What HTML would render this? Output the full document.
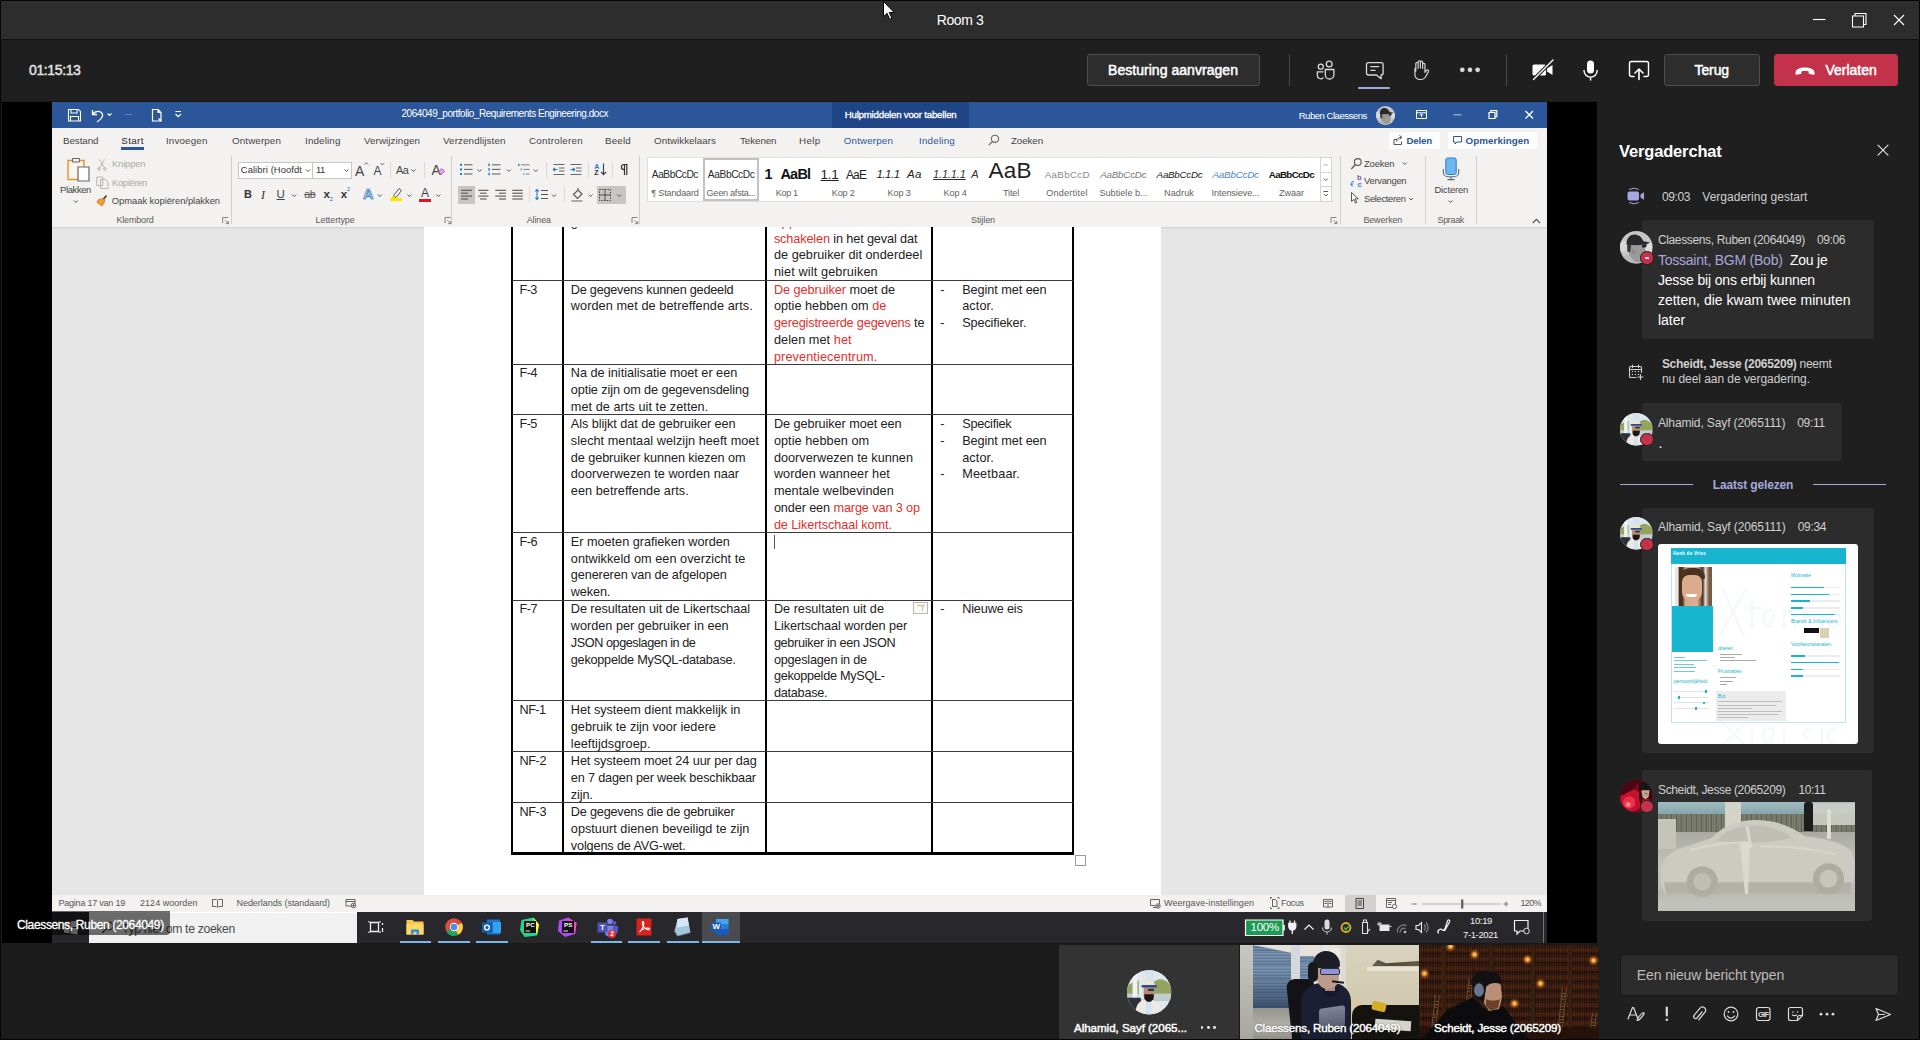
<!DOCTYPE html>
<html lang="nl">
<head>
<meta charset="utf-8">
<title>Room 3</title>
<style>
*{box-sizing:border-box;margin:0;padding:0}
html,body{width:1920px;height:1040px;overflow:hidden;background:#1f1f1f;font-family:"Liberation Sans",sans-serif;}
.a{position:absolute}
.t{position:absolute;white-space:nowrap;line-height:1}
svg{position:absolute;overflow:visible}
#titlebar{left:0;top:0;width:1920px;height:39px;background:#2d2d2d}
#titleline{left:0;top:39px;width:1920px;height:1px;background:#111}
#toolbar{left:0;top:40px;width:1920px;height:62px;background:#1f1f1f;border-bottom:1.500px solid #1a1a1a}
#stage{left:2px;top:102px;width:1595px;height:841px;background:#000}
#chat{left:1598px;top:101px;width:322px;height:939px;background:#1f1f1f}
#strip{left:0;top:943px;width:1598px;height:97px;background:#1b1b1b}
.btn{background:#2d2d2d;border:1px solid #4d4d4d;border-radius:3px;color:#fff;font-weight:bold;font-size:14px;line-height:30px;text-align:center;white-space:nowrap}
#word{left:52px;top:102px;width:1495px;height:841px;background:#f3f2f1;overflow:hidden}
#wordin{left:-52px;top:-102px;width:1920px;height:1040px}
</style>
</head>
<body>
<div class="a" id="titlebar"></div>
<div class="a" id="titleline"></div>
<div class="a" id="toolbar"></div>
<div class="a" id="stage"></div>
<div class="a" id="chat"></div>
<div class="a" id="strip"></div>
<div class="a" style="left:0;top:0;width:1920px;height:1px;background:#060606"></div>
<div class="a" style="left:0;top:0;width:1px;height:1040px;background:#060606"></div>
<div class="a" style="left:1919px;top:0;width:1px;height:1040px;background:#060606"></div>
<div class="a" style="left:0;top:1039px;width:1920px;height:1px;background:#060606;z-index:5"></div>
<svg style="left:0;top:0" width="1920" height="40" viewBox="0 0 1920 40">
<path d="M883.5 1.5v15.2l3.6-3.4 2.6 6 2.2-.9-2.6-5.9h4.9z" fill="#fff" stroke="#000" stroke-width="1" stroke-linejoin="miter"/>
<path d="M1813 19.5h12.5" stroke="#fff" stroke-width="1.1" fill="none"/>
<path d="M1852.5 16h11v11h-11z M1855 16v-2.5h11v11h-2.5" stroke="#fff" stroke-width="1.1" fill="none"/>
<path d="M1894 15l10 10M1904 15l-10 10" stroke="#fff" stroke-width="1.1" fill="none"/>
</svg>

<div class="a btn" style="left:1087px;top:54px;width:173px;height:32px"></div>
<div class="a" style="left:1289px;top:54px;width:1px;height:32px;background:#484848"></div>
<div class="a" style="left:1358px;top:86.600px;width:32px;height:2.500px;background:#a6a7dc;border-radius:1px"></div>
<div class="a" style="left:1506px;top:54px;width:1px;height:32px;background:#484848"></div>
<div class="a btn" style="left:1664px;top:54px;width:96px;height:32px"></div>
<div class="a btn" style="left:1774px;top:54px;width:124px;height:32px;background:#c4314b;border-color:#c4314b;padding-left:38px"></div>
<svg style="left:0;top:40px" width="1920" height="61" viewBox="0 40 1920 61" fill="none" stroke="#dadada" stroke-width="1.3" stroke-linecap="round" stroke-linejoin="round">
<!-- people -->
<circle cx="1320.800" cy="66.700" r="2.500"/><circle cx="1329.200" cy="64" r="2.900"/>
<path d="M1325.300 69.500h8.600v5.200a4.300 4.300 0 0 1-8.600 0z"/>
<path d="M1323 71.800h-5.700v3.500a3.400 3.400 0 0 0 5.700 2.600"/>
<!-- chat -->
<path d="M1368.500 62.600h12.600a2 2 0 0 1 2 2v8.400a2 2 0 0 1-2 2v3.800l-4.600-3.800h-8a2 2 0 0 1-2-2v-8.400a2 2 0 0 1 2-2z"/>
<path d="M1370.800 66.700h7.800M1370.800 70.300h4.400"/>
<!-- hand -->
<g transform="translate(1421.700 70.200) scale(0.880) translate(-1423.200 -70.950)"><path d="M1416.500 72v-8.500a1.300 1.300 0 0 1 2.600 0v5.500v-7.500a1.300 1.300 0 0 1 2.600 0v7v-6.500a1.300 1.300 0 0 1 2.600 0v7v-4.500a1.300 1.300 0 0 1 2.600 0v9l1.600-2.300a1.400 1.400 0 0 1 2.400 1.400l-3.600 6.400a5.500 5.500 0 0 1-4.800 2.500h-1.500a5.500 5.500 0 0 1-5.500-5.500v-6.500a1.200 1.200 0 0 1 1-1"/></g>
<!-- dots -->
<g fill="#d6d6d6" stroke="none"><circle cx="1462.300" cy="69.800" r="2.400"/><circle cx="1470" cy="69.800" r="2.400"/><circle cx="1477.600" cy="69.800" r="2.400"/></g>
<!-- camera off -->
<g fill="#fff" stroke="none"><path d="M1534 64.500h10.500a1.500 1.500 0 0 1 1.500 1.500v8a1.500 1.500 0 0 1-1.500 1.500h-10.500a1.500 1.500 0 0 1-1.500-1.500v-8a1.500 1.500 0 0 1 1.500-1.500z"/><path d="M1547 68.500l5.500-3.500v10l-5.500-3.500z"/></g>
<path d="M1533 80l20-20" stroke="#1f1f1f" stroke-width="3.500"/><path d="M1533.500 79.500l19.500-19.500" stroke="#fff" stroke-width="1.400"/>
<!-- mic -->
<rect x="1587" y="60.500" width="7" height="13" rx="3.500" fill="#fff" stroke="none"/>
<path d="M1584 70.500a6.600 6.600 0 0 0 13.200 0M1590.600 77.500v2.500" stroke="#fff" stroke-width="1.400"/>
<!-- share -->
<path d="M1634 76.500h-2.500a2 2 0 0 1-2-2v-11a2 2 0 0 1 2-2h15a2 2 0 0 1 2 2v11a2 2 0 0 1-2 2h-2.500" stroke="#fff" stroke-width="1.400"/>
<path d="M1639 79.500v-10.500M1635 73l4-4l4 4" stroke="#fff" stroke-width="1.600"/>
<!-- phone -->
<path d="M1795.500 72.500c0-3 4-5 9.500-5s9.500 2 9.500 5v1.200a1 1 0 0 1-1.200 1l-3.800-.8a1 1 0 0 1-.8-1v-1.400c-1-.5-2.300-.7-3.700-.7s-2.700.2-3.700.7v1.400a1 1 0 0 1-.8 1l-3.800.8a1 1 0 0 1-1.200-1z" fill="#fff" stroke="none"/>
</svg>

<div class="t" style="left:29.0px;top:63.0px;font-size:14px;color:#e2e2e2;letter-spacing:-0.375px;-webkit-text-stroke:.45px #e2e2e2;">01:15:13</div>
<div class="t" style="left:1108.0px;top:63.1px;font-size:14px;color:#fff;letter-spacing:0.042px;-webkit-text-stroke:.5px #fff;">Besturing aanvragen</div>
<div class="t" style="left:1694.5px;top:63.1px;font-size:14px;color:#fff;letter-spacing:-0.106px;-webkit-text-stroke:.5px #fff;">Terug</div>
<div class="t" style="left:1825.4px;top:63.1px;font-size:14px;color:#fff;letter-spacing:0.003px;-webkit-text-stroke:.5px #fff;">Verlaten</div>
<div class="t" style="left:936.8px;top:13.1px;font-size:14px;color:#fff;letter-spacing:-0.422px;">Room 3</div>
<div class="a" id="word"><div class="a" id="wordin">
<div class="a" style="left:52px;top:102px;width:1495px;height:26px;background:#2b579a"></div>
<div class="a" style="left:832px;top:102px;width:137px;height:26px;background:#1f4586"></div>
<div class="t" style="left:401.5px;top:109.3px;font-size:10px;color:#fff;letter-spacing:-0.456px;">2064049_portfolio_Requirements Engineering.docx</div>
<div class="t" style="left:844.7px;top:109.5px;font-size:9.7px;color:#fff;letter-spacing:-0.216px;-webkit-text-stroke:.3px #fff;">Hulpmiddelen voor tabellen</div>
<div class="t" style="left:1298.7px;top:111.0px;font-size:9.6px;color:#fff;letter-spacing:-0.509px;">Ruben Claessens</div>
<svg style="left:1375.5px;top:105.8px" width="19.0" height="19.0" viewBox="-16 -16 32 32"><defs><clipPath id="av1"><circle cx="0" cy="0" r="16"/></clipPath></defs><g clip-path="url(#av1)"><rect x="-16" y="-16" width="32" height="32" fill="#c6c6c6"/><rect x="-16" y="-6" width="9" height="10" fill="#d8d8d8"/><rect x="9" y="-4" width="7" height="9" fill="#dcdcdc"/><ellipse cx="-4" cy="16" rx="13" ry="9" fill="#b9b9b9"/><path d="M-8 -2l1 9l5 7l7 1l3-5l1-7l-2-6z" fill="#9a9a9a"/><path d="M-9 -3l0 7l3 1l1-7z" fill="#3c3c3c"/><path d="M-9.500 -2.500c-1-11 12-14 16.500-3.500l6.500 1.200l-4 2l-9 0.800z" fill="#2a2a2a"/><path d="M5.500 -2.500l5-0.500l-1 3l-3.500 0.500z" fill="#222"/><path d="M-3 2a2 3 0 0 0 2 4" stroke="#777" stroke-width="1" fill="none"/></g></svg>
<svg style="left:52px;top:102px" width="1495" height="26" viewBox="52 102 1495 26" fill="none" stroke="#fff" stroke-width="1.100">
<path d="M68.500 109.500h10l2 2v9.500h-12z M71 109.500v3.500h6v-3.500 M70.500 121v-4.500h8v4.500"/>
<path d="M92.500 110v4.500h4.500 M92.800 114.200c2.500-3.800 8.500-4 9.700 0.300c0.800 3.200-2.500 5.500-5.500 7.500" stroke-width="1.300"/>
<path d="M107.500 113.500l2 2l2-2" />
<path d="M125 114.500h7" stroke="#5f83bd"/>
<path d="M152.500 109.500h5.500l3 3v8.500h-8.500z M158 109.500v3h3 M158.500 118.500l3 3" stroke-width="1.200"/>
<path d="M175.500 111.500h5.500 M175.500 114l2.750 2.750l2.750-2.750" />
<path d="M1416.500 110.500h10v8h-10z M1416.500 112.800h10 M1421.500 117v-3 M1420 115.300l1.500-1.500l1.500 1.500" stroke-width="1"/>
<path d="M1453.500 114.800h8" stroke="#9fb6dc" stroke-width="1.200"/>
<path d="M1489 112.500h6v6h-6z M1490.800 112.500v-1.800h6v6h-1.800" stroke-width="1.200"/>
<path d="M1525.500 111l7.500 7.500 M1533 111l-7.500 7.500" stroke-width="1.400"/>
</svg>
<div class="a" style="left:52px;top:128px;width:1495px;height:24px;background:#f3f2f1"></div>
<div class="t" style="left:63.0px;top:136.1px;font-size:9.8px;color:#444;letter-spacing:-0.079px;">Bestand</div>
<div class="t" style="left:121.3px;top:136.1px;font-size:9.8px;color:#2b2b2b;letter-spacing:0.359px;">Start</div>
<div class="t" style="left:166.0px;top:136.1px;font-size:9.8px;color:#444;letter-spacing:0.148px;">Invoegen</div>
<div class="t" style="left:232.0px;top:136.1px;font-size:9.8px;color:#444;letter-spacing:0.118px;">Ontwerpen</div>
<div class="t" style="left:305.0px;top:136.1px;font-size:9.8px;color:#444;letter-spacing:0.159px;">Indeling</div>
<div class="t" style="left:364.0px;top:136.1px;font-size:9.8px;color:#444;letter-spacing:0.082px;">Verwijzingen</div>
<div class="t" style="left:443.0px;top:136.1px;font-size:9.8px;color:#444;letter-spacing:0.107px;">Verzendlijsten</div>
<div class="t" style="left:529.0px;top:136.1px;font-size:9.8px;color:#444;letter-spacing:0.254px;">Controleren</div>
<div class="t" style="left:605.0px;top:136.1px;font-size:9.8px;color:#444;letter-spacing:0.188px;">Beeld</div>
<div class="t" style="left:654.0px;top:136.1px;font-size:9.8px;color:#444;letter-spacing:0.036px;">Ontwikkelaars</div>
<div class="t" style="left:740.0px;top:136.1px;font-size:9.8px;color:#444;letter-spacing:-0.078px;">Tekenen</div>
<div class="t" style="left:799.0px;top:136.1px;font-size:9.8px;color:#444;letter-spacing:0.336px;">Help</div>
<div class="t" style="left:843.8px;top:136.1px;font-size:9.8px;color:#2b579a;letter-spacing:0.140px;">Ontwerpen</div>
<div class="t" style="left:919.0px;top:136.1px;font-size:9.8px;color:#2b579a;letter-spacing:0.209px;">Indeling</div>
<div class="t" style="left:1011.0px;top:136.1px;font-size:9.8px;color:#444;letter-spacing:-0.115px;">Zoeken</div>
<div class="a" style="left:121px;top:147px;width:23px;height:2.500px;background:#2b579a"></div>
<svg style="left:988px;top:134px" width="12" height="12" viewBox="0 0 12 12" fill="none" stroke="#666" stroke-width="1.100"><circle cx="7" cy="4.800" r="3.600"/><path d="M4.500 7.500l-3.700 3.700"/></svg>
<div class="a" style="left:1388.500px;top:131.500px;width:51px;height:17.500px;background:#fdfdfd;border-radius:1px"></div>
<div class="a" style="left:1447.500px;top:131.500px;width:89.500px;height:17.500px;background:#fdfdfd;border-radius:1px"></div>
<div class="t" style="left:1406.6px;top:136.2px;font-size:9.6px;color:#2b579a;letter-spacing:-0.148px;font-weight:bold;">Delen</div>
<div class="t" style="left:1465.5px;top:136.1px;font-size:9.8px;color:#2b579a;letter-spacing:0.068px;font-weight:bold;">Opmerkingen</div>
<svg style="left:1388px;top:131px" width="150" height="18" viewBox="1388 131 150 18" fill="none" stroke="#555" stroke-width="1">
<path d="M1397 139.500h-3v5h7.500v-3 M1396.500 141.500c0.500-2.500 2-4 4.500-4.200 M1399.500 135.500l2.500 1.800l-2.500 2"/>
<path d="M1453.500 136.500h8v5.500h-4.500l-2 2v-2h-1.500z" stroke="#2b579a"/>
</svg>
<div class="a" style="left:52px;top:152px;width:1495px;height:75px;background:#f3f2f1"></div>
<div class="a" style="left:231.3px;top:155.5px;width:1px;height:68.0px;background:#d2d0ce"></div>
<div class="a" style="left:451.0px;top:155.5px;width:1px;height:68.0px;background:#d2d0ce"></div>
<div class="a" style="left:638.8px;top:155.5px;width:1px;height:68.0px;background:#d2d0ce"></div>
<div class="a" style="left:1340.3px;top:155.5px;width:1px;height:68.0px;background:#d2d0ce"></div>
<div class="a" style="left:1425.3px;top:155.5px;width:1px;height:68.0px;background:#d2d0ce"></div>
<div class="a" style="left:1476.2px;top:155.5px;width:1px;height:68.0px;background:#d2d0ce"></div>
<div class="a" style="left:389.5px;top:162.0px;width:1px;height:16.0px;background:#dcdad8"></div>
<div class="a" style="left:424.2px;top:162.0px;width:1px;height:16.0px;background:#dcdad8"></div>
<div class="a" style="left:546.0px;top:162.0px;width:1px;height:16.0px;background:#dcdad8"></div>
<div class="a" style="left:588.2px;top:162.0px;width:1px;height:16.0px;background:#dcdad8"></div>
<div class="a" style="left:612.4px;top:162.0px;width:1px;height:16.0px;background:#dcdad8"></div>
<div class="a" style="left:529.2px;top:186.0px;width:1px;height:17.0px;background:#dcdad8"></div>
<div class="a" style="left:564.3px;top:186.0px;width:1px;height:17.0px;background:#dcdad8"></div>
<div class="t" style="left:116.4px;top:216.3px;font-size:9.0px;color:#5a5a5a;letter-spacing:-0.166px;">Klembord</div>
<div class="t" style="left:315.6px;top:216.3px;font-size:9.0px;color:#5a5a5a;letter-spacing:-0.093px;">Lettertype</div>
<div class="t" style="left:526.7px;top:216.3px;font-size:9.0px;color:#5a5a5a;letter-spacing:-0.122px;">Alinea</div>
<div class="t" style="left:971.0px;top:216.3px;font-size:9.0px;color:#5a5a5a;letter-spacing:-0.074px;">Stijlen</div>
<div class="t" style="left:1363.4px;top:216.3px;font-size:9.0px;color:#5a5a5a;letter-spacing:-0.154px;">Bewerken</div>
<div class="t" style="left:1437.5px;top:216.3px;font-size:9.0px;color:#5a5a5a;letter-spacing:-0.339px;">Spraak</div>
<div class="t" style="left:60.0px;top:184.8px;font-size:9.4px;color:#444;letter-spacing:-0.337px;">Plakken</div>
<div class="t" style="left:112.0px;top:159.3px;font-size:9.4px;color:#a9a9a9;letter-spacing:-0.158px;">Knippen</div>
<div class="t" style="left:112.0px;top:177.5px;font-size:9.4px;color:#a9a9a9;letter-spacing:-0.316px;">Kopiëren</div>
<div class="t" style="left:111.8px;top:196.4px;font-size:9.4px;color:#444;letter-spacing:-0.031px;">Opmaak kopiëren/plakken</div>
<div class="a" style="left:238px;top:161.500px;width:75px;height:17px;background:#fff;border:1px solid #c8c6c4"></div>
<div class="a" style="left:312px;top:161.500px;width:39.500px;height:17px;background:#fff;border:1px solid #c8c6c4"></div>
<div class="t" style="left:240.8px;top:165.1px;font-size:9.4px;color:#333;letter-spacing:0.085px;">Calibri (Hoofdt</div>
<div class="t" style="left:316.0px;top:165.1px;font-size:9.4px;color:#333;letter-spacing:-0.567px;">11</div>
<div class="t" style="left:355.0px;top:163.7px;font-size:14px;color:#444;letter-spacing:-0.344px;">A</div>
<div class="t" style="left:373.5px;top:165.1px;font-size:12px;color:#444;letter-spacing:-0.516px;">A</div>
<div class="t" style="left:396.0px;top:165.1px;font-size:11px;color:#444;letter-spacing:-0.584px;">Aa</div>
<div class="t" style="left:431.5px;top:162.7px;font-size:14px;color:#444;letter-spacing:-0.844px;">A</div>
<div class="t" style="left:243.9px;top:189.1px;font-size:11px;color:#333;letter-spacing:-1.353px;font-weight:bold;">B</div>
<div class="t" style="left:261.0px;top:188.6px;font-size:12px;color:#333;font-style:italic;font-family:'Liberation Serif',serif;">I</div>
<div class="t" style="left:276.5px;top:188.7px;font-size:11.5px;color:#444;text-decoration:underline;">U</div>
<div class="t" style="left:304.3px;top:189.3px;font-size:10.6px;color:#555;letter-spacing:-0.398px;text-decoration:line-through;">ab</div>
<div class="t" style="left:323.5px;top:188.8px;font-size:11.5px;color:#333;font-weight:bold;">x</div>
<div class="t" style="left:329.8px;top:196.8px;font-size:5.5px;color:#2b579a;">2</div>
<div class="t" style="left:340.8px;top:188.8px;font-size:11.5px;color:#333;font-weight:bold;">x</div>
<div class="t" style="left:347.0px;top:187.3px;font-size:5.5px;color:#2b579a;">2</div>
<div class="t" style="left:363.0px;top:186.9px;font-size:14.5px;color:#2f7fd1;letter-spacing:-0.484px;font-weight:bold;-webkit-text-stroke:0.6px #1e63b0;color:#9fd0f5;">A</div>
<div class="t" style="left:421.0px;top:186.6px;font-size:12px;color:#444;letter-spacing:-0.016px;">A</div>
<div class="a" style="left:390.300px;top:198px;width:12.200px;height:3.300px;background:#ffe500"></div>
<div class="a" style="left:419px;top:198.500px;width:12px;height:3px;background:#e81123"></div>
<div class="a" style="left:458px;top:186.300px;width:16.700px;height:17.700px;background:#c8c6c4"></div>
<div class="a" style="left:597px;top:186.300px;width:29px;height:17.700px;background:#c8c6c4"></div>
<div class="a" style="left:647px;top:157px;width:673.500px;height:45px;background:#fff;border:1px solid #e1dfdd"></div>
<div class="a" style="left:703.400px;top:158.200px;width:55.400px;height:43.200px;border:2px solid #c2c2c2"></div>
<div class="a" style="left:1320px;top:157px;width:11.500px;height:45px;background:#fff;border:1px solid #d6d4d2"></div>
<div class="a" style="left:1320px;top:172px;width:11.500px;height:15px;border-top:1px solid #d6d4d2;border-bottom:1px solid #d6d4d2"></div>
<div class="t" style="left:651.8px;top:169.8px;font-size:10.2px;color:#2a2a2a;letter-spacing:-0.454px;">AaBbCcDc</div>
<div class="t" style="left:651.3px;top:188.5px;font-size:9.1px;color:#5f5f5f;letter-spacing:-0.181px;">¶ Standaard</div>
<div class="t" style="left:707.8px;top:169.8px;font-size:10.2px;color:#2a2a2a;letter-spacing:-0.391px;">AaBbCcDc</div>
<div class="t" style="left:706.5px;top:188.5px;font-size:9.1px;color:#5f5f5f;letter-spacing:-0.244px;">Geen afsta...</div>
<div class="t" style="left:764.5px;top:167.2px;font-size:14.5px;color:#111;letter-spacing:-1.078px;font-weight:bold;">1</div>
<div class="t" style="left:780.4px;top:167.2px;font-size:14.5px;color:#111;letter-spacing:-0.762px;font-weight:bold;">AaBl</div>
<div class="t" style="left:775.8px;top:188.5px;font-size:9.1px;color:#5f5f5f;letter-spacing:-0.373px;">Kop 1</div>
<div class="t" style="left:820.5px;top:167.9px;font-size:13.5px;color:#222;letter-spacing:-0.194px;text-decoration:underline;">1.1</div>
<div class="t" style="left:846.0px;top:168.6px;font-size:12px;color:#222;letter-spacing:-0.896px;">AaE</div>
<div class="t" style="left:831.8px;top:188.5px;font-size:9.1px;color:#5f5f5f;letter-spacing:-0.173px;">Kop 2</div>
<div class="t" style="left:876.4px;top:169.2px;font-size:11.5px;color:#222;letter-spacing:-0.436px;font-style:italic;">1.1.1</div>
<div class="t" style="left:907.0px;top:169.2px;font-size:11.5px;color:#222;letter-spacing:0.261px;font-style:italic;">Aa</div>
<div class="t" style="left:887.5px;top:188.5px;font-size:9.1px;color:#5f5f5f;letter-spacing:-0.113px;">Kop 3</div>
<div class="t" style="left:933.0px;top:169.4px;font-size:11px;color:#333;letter-spacing:-0.134px;font-style:italic;text-decoration:underline;">1.1.1.1</div>
<div class="t" style="left:971.2px;top:169.4px;font-size:11px;color:#333;letter-spacing:-1.344px;font-style:italic;">A</div>
<div class="t" style="left:943.5px;top:188.5px;font-size:9.1px;color:#5f5f5f;letter-spacing:-0.113px;">Kop 4</div>
<div class="a" style="left:980px;top:158px;width:60px;height:26px;overflow:hidden"><div class="t" style="left:8.4px;top:1.5px;font-size:22.5px;color:#222;letter-spacing:0.356px;">AaB</div></div>
<div class="t" style="left:1003.0px;top:188.5px;font-size:9.1px;color:#5f5f5f;letter-spacing:-0.169px;">Titel</div>
<div class="t" style="left:1044.7px;top:170.0px;font-size:9.8px;color:#8a8a8a;letter-spacing:0.326px;">AaBbCcD</div>
<div class="t" style="left:1046.3px;top:188.5px;font-size:9.1px;color:#5f5f5f;letter-spacing:0.206px;">Ondertitel</div>
<div class="t" style="left:1100.3px;top:170.0px;font-size:9.8px;color:#7a7a7a;letter-spacing:-0.240px;font-style:italic;">AaBbCcDc</div>
<div class="t" style="left:1099.4px;top:188.5px;font-size:9.1px;color:#5f5f5f;letter-spacing:0.028px;">Subtiele b...</div>
<div class="t" style="left:1156.6px;top:170.0px;font-size:9.8px;color:#222;letter-spacing:-0.253px;font-style:italic;">AaBbCcDc</div>
<div class="t" style="left:1164.0px;top:188.5px;font-size:9.1px;color:#5f5f5f;letter-spacing:0.112px;">Nadruk</div>
<div class="t" style="left:1212.5px;top:170.0px;font-size:9.8px;color:#4a86d0;letter-spacing:-0.203px;font-style:italic;">AaBbCcDc</div>
<div class="t" style="left:1211.6px;top:188.5px;font-size:9.1px;color:#5f5f5f;letter-spacing:-0.096px;">Intensieve...</div>
<div class="t" style="left:1268.8px;top:170.0px;font-size:9.8px;color:#111;letter-spacing:-0.680px;font-weight:bold;">AaBbCcDc</div>
<div class="t" style="left:1279.0px;top:188.5px;font-size:9.1px;color:#5f5f5f;letter-spacing:-0.053px;">Zwaar</div>
<div class="t" style="left:1364.0px;top:158.5px;font-size:9.4px;color:#444;letter-spacing:-0.147px;">Zoeken</div>
<div class="t" style="left:1364.0px;top:176.4px;font-size:9.4px;color:#444;letter-spacing:-0.281px;">Vervangen</div>
<div class="t" style="left:1364.0px;top:193.9px;font-size:9.4px;color:#444;letter-spacing:-0.323px;">Selecteren</div>
<div class="t" style="left:1434.4px;top:184.5px;font-size:9.4px;color:#444;letter-spacing:-0.165px;">Dicteren</div>
<svg style="left:52px;top:152px" width="1495" height="75" viewBox="52 152 1495 75" fill="none" stroke="#555" stroke-width="1">
<path d="M68 160.500h16v19h-16z" stroke="#e8912d" stroke-width="1.400" fill="#fdf6ee"/><path d="M72.500 158.500h7v3.500h-7z" stroke="#666" fill="#f3f2f1"/><path d="M78 167h11v14h-11z" stroke="#666" fill="#fff" stroke-width="1.200"/>
<path d="M73.8 200.5l2 2l2-2" stroke="#555"/>
<path d="M99.500 159.500l5 8.500 M104.500 159.500l-5 8.500" stroke="#b5b5b5"/><circle cx="99" cy="169" r="1.300" stroke="#b5b5b5"/><circle cx="105" cy="169" r="1.300" stroke="#b5b5b5"/>
<path d="M96.800 177h6v8.500h-6z M100.500 179.500h5l2.500 2.500v6.500h-7.500z" stroke="#b5b5b5" fill="#f3f2f1"/>
<path d="M106.500 195.500l-4 5" stroke="#444" stroke-width="1.800"/><path d="M98 200l4.500-1.500l2.500 2.500l-3 5l-5-3.500z" fill="#f0a030" stroke="#d8861c"/>
<path d="M222.6 223v-5.500h5.500 M225.1 220.300l3.200 3.200 M228.4 221v2.600h-2.600" stroke="#777" stroke-width="0.900"/>
<path d="M445.0 223v-5.500h5.500 M447.5 220.300l3.200 3.200 M450.8 221v2.600h-2.600" stroke="#777" stroke-width="0.900"/>
<path d="M632.0 223v-5.500h5.500 M634.5 220.300l3.200 3.200 M637.8 221v2.600h-2.600" stroke="#777" stroke-width="0.900"/>
<path d="M1331.0 223v-5.500h5.500 M1333.5 220.300l3.200 3.200 M1336.8 221v2.600h-2.600" stroke="#777" stroke-width="0.900"/>
<path d="M306.0 169.5l2 2l2-2" stroke="#555"/>
<path d="M344.5 169.5l2 2l2-2" stroke="#555"/>
<path d="M411.4 169.5l2 2l2-2" stroke="#555"/>
<path d="M292.2 194.5l2 2l2-2" stroke="#555"/>
<path d="M377.8 194.5l2 2l2-2" stroke="#555"/>
<path d="M407.5 194.5l2 2l2-2" stroke="#555"/>
<path d="M436.4 194.5l2 2l2-2" stroke="#555"/>
<path d="M364.500 164.500l1.800-1.800l1.800 1.800" stroke="#555" stroke-width="0.900"/><path d="M380.500 163.200l1.800 1.800l1.800-1.800" stroke="#555" stroke-width="0.900"/>
<path d="M438.500 172l3-3.500l3 2.500l-3 3.500z" fill="#e9a8e6" stroke="#b44ac0" stroke-width="0.900"/>
<path d="M393.500 195.500l5.500-7l2.500 2l-5.500 7z" stroke="#555" fill="#f3f2f1"/><path d="M393.500 195.500l-1 2.200l3.500-0.200z" fill="#ffe500" stroke="#c9b400" stroke-width="0.600"/>
<rect x="460" y="163.8" width="2" height="2" fill="#1e78d0" stroke="none"/><path d="M464 164.8h8.500" stroke="#666" stroke-width="1.100"/>
<rect x="488.400" y="163.5" width="1.400" height="2.600" fill="#1e78d0" stroke="none"/><path d="M492 164.8h8.500" stroke="#666" stroke-width="1.100"/>
<rect x="460" y="168.4" width="2" height="2" fill="#1e78d0" stroke="none"/><path d="M464 169.4h8.500" stroke="#666" stroke-width="1.100"/>
<rect x="488.400" y="168.1" width="1.400" height="2.600" fill="#1e78d0" stroke="none"/><path d="M492 169.4h8.500" stroke="#666" stroke-width="1.100"/>
<rect x="460" y="173.0" width="2" height="2" fill="#1e78d0" stroke="none"/><path d="M464 174.0h8.500" stroke="#666" stroke-width="1.100"/>
<rect x="488.400" y="172.7" width="1.400" height="2.600" fill="#1e78d0" stroke="none"/><path d="M492 174.0h8.500" stroke="#666" stroke-width="1.100"/>
<rect x="518" y="163.800" width="1.500" height="2" fill="#1e78d0" stroke="none"/><path d="M521 164.800h8.500" stroke="#888" stroke-width="1.100"/><rect x="520.500" y="168.400" width="1.500" height="2" fill="#7ab0e6" stroke="none"/><path d="M523.500 169.400h6" stroke="#888" stroke-width="1.100"/><rect x="523" y="173" width="1.500" height="2" fill="#7ab0e6" stroke="none"/><path d="M526 174h3.500" stroke="#888" stroke-width="1.100"/>
<path d="M477.5 169.5l2 2l2-2" stroke="#555"/>
<path d="M506.8 169.5l2 2l2-2" stroke="#555"/>
<path d="M533.8 169.5l2 2l2-2" stroke="#555"/>
<path d="M553.500 164.500h11 M559 168h5.500 M559 171h5.500 M553.500 174.500h11" stroke="#666" stroke-width="1.100"/><path d="M557.500 169.500h-4 M555 168l-1.700 1.500l1.700 1.500" stroke="#1e78d0" stroke-width="1.100"/>
<path d="M570.500 164.500h11 M576 168h5.500 M576 171h5.500 M570.500 174.500h11" stroke="#666" stroke-width="1.100"/><path d="M570.500 169.500h4 M573 168l1.700 1.500l-1.700 1.500" stroke="#1e78d0" stroke-width="1.100"/>
<path d="M603.500 163.500v11 M601 172l2.500 2.700l2.500-2.700" stroke="#444" stroke-width="1.200"/>
<path d="M627.500 164.500h-3.500a2.600 2.600 0 0 0 0 5.200h0.500 M624.500 164.500v10.500 M626.800 164.500v10.500" stroke="#333" stroke-width="1.200"/>
<path d="M461.0 190.3H472.0" stroke="#555" stroke-width="1.100"/>
<path d="M461.0 193.2H468.1" stroke="#555" stroke-width="1.100"/>
<path d="M461.0 196.1H472.0" stroke="#555" stroke-width="1.100"/>
<path d="M461.0 199.0H468.1" stroke="#555" stroke-width="1.100"/>
<path d="M478.3 190.3H488.4" stroke="#555" stroke-width="1.100"/>
<path d="M480.1 193.2H486.6" stroke="#555" stroke-width="1.100"/>
<path d="M478.3 196.1H488.4" stroke="#555" stroke-width="1.100"/>
<path d="M480.1 199.0H486.6" stroke="#555" stroke-width="1.100"/>
<path d="M495.2 190.3H506.0" stroke="#555" stroke-width="1.100"/>
<path d="M499.0 193.2H506.0" stroke="#555" stroke-width="1.100"/>
<path d="M495.2 196.1H506.0" stroke="#555" stroke-width="1.100"/>
<path d="M499.0 199.0H506.0" stroke="#555" stroke-width="1.100"/>
<path d="M512.3 190.3H522.8" stroke="#555" stroke-width="1.100"/>
<path d="M512.3 193.2H522.8" stroke="#555" stroke-width="1.100"/>
<path d="M512.3 196.1H522.8" stroke="#555" stroke-width="1.100"/>
<path d="M512.3 199.0H522.8" stroke="#555" stroke-width="1.100"/>
<path d="M537 189.500v10 M535.300 191.300l1.700-1.800l1.700 1.800 M535.300 197.700l1.700 1.800l1.700-1.800" stroke="#1e78d0" stroke-width="1.100"/><path d="M541 190.500h7 M541 194.500h7 M541 198.500h7" stroke="#555" stroke-width="1.100"/>
<path d="M552.0 194.5l2 2l2-2" stroke="#555"/>
<path d="M573.500 194.500l4.500-4.500l4 4l-4.500 4.500z M578 190v-2" stroke="#555" stroke-width="1.100"/><path d="M571.500 201h11" stroke="#999" stroke-width="1.600"/>
<path d="M588.5 194.5l2 2l2-2" stroke="#555"/>
<path d="M599.500 189.500h11v11h-11z" stroke="#444" stroke-dasharray="1.500 1.200" stroke-width="1"/><path d="M599.500 195h11 M605 189.500v11" stroke="#444" stroke-width="0.900"/>
<path d="M617.2 194.5l2 2l2-2" stroke="#555"/>
<path d="M1323.800 166l2 -2l2 2" stroke="#b5b5b5"/><path d="M1323.800 178.500l2 2l2-2" stroke="#555"/><path d="M1323.500 191.500h4.500 M1323.800 194l2 2l2-2" stroke="#555"/>
<circle cx="1357.800" cy="162" r="3.400" stroke="#555" stroke-width="1.100"/><path d="M1355.500 164.500l-4.200 4.500" stroke="#555" stroke-width="1.200"/>
<path d="M1402.7 162.5l2 2l2-2" stroke="#555"/>
<path d="M1409.0 198.0l2 2l2-2" stroke="#555"/>
<path d="M1351 184.500c0-2 1.500-3 3-3 M1352.500 186.500l-1.600-2l2.400-0.600" stroke="#2b7cd3" stroke-width="1"/>
<path d="M1351.500 192.500v9l2.200-2.200l1.800 3.800l1.300-0.600l-1.800-3.700h3.200z" stroke="#444" stroke-width="0.900" fill="#fff"/>
<rect x="1445.800" y="158" width="10.400" height="16.500" rx="1.800" fill="#6db6ef" stroke="#2b7cd3" stroke-width="1"/><path d="M1443.300 169v3.200a4.500 4.500 0 0 0 4.500 4.500h6.400a4.500 4.500 0 0 0 4.500-4.500v-3.200 M1451 176.800v2.600 M1447.500 179.600h7.200" stroke="#5a6a7a" stroke-width="1.100"/>
<path d="M1448.6 200.5l2 2l2-2" stroke="#555"/>
<path d="M1532.800 223l3.600-3.600l3.600 3.600" stroke="#555" stroke-width="1.100"/>
</svg>
<div class="t" style="left:1357.0px;top:173.9px;font-size:7.5px;color:#8a4fc7;font-weight:bold;">b</div>
<div class="t" style="left:1357.5px;top:180.6px;font-size:7.5px;color:#2b7cd3;font-weight:bold;">c</div>
<div class="t" style="left:594.3px;top:162.6px;font-size:7px;color:#1e78d0;font-weight:bold;">A</div>
<div class="t" style="left:594.3px;top:169.4px;font-size:7px;color:#333;font-weight:bold;">Z</div>
<div class="a" style="left:52px;top:227px;width:1495px;height:668px;background:#e7e6e7;overflow:hidden"><div class="a" style="left:-52px;top:-227px;width:1920px;height:1040px">
<div class="a" style="left:52px;top:227px;width:1495px;height:2px;background:linear-gradient(#cfcfcf,#e7e6e7)"></div>
<div class="a" style="left:424px;top:227px;width:737px;height:668px;background:#fff"></div>
<div class="a" style="left:511.1px;top:227px;width:2.2px;height:627.5px;background:#000"></div>
<div class="a" style="left:561.9px;top:227px;width:2.2px;height:627.5px;background:#000"></div>
<div class="a" style="left:764.9px;top:227px;width:2.2px;height:627.5px;background:#000"></div>
<div class="a" style="left:931.0px;top:227px;width:2.2px;height:627.5px;background:#000"></div>
<div class="a" style="left:1071.6px;top:227px;width:2.2px;height:627.5px;background:#000"></div>
<div class="a" style="left:512px;top:279.6px;width:561px;height:1.3px;background:#3a3a3a"></div>
<div class="a" style="left:512px;top:363.5px;width:561px;height:1.3px;background:#3a3a3a"></div>
<div class="a" style="left:512px;top:414.2px;width:561px;height:1.3px;background:#3a3a3a"></div>
<div class="a" style="left:512px;top:531.9px;width:561px;height:1.3px;background:#3a3a3a"></div>
<div class="a" style="left:512px;top:599.5px;width:561px;height:1.3px;background:#3a3a3a"></div>
<div class="a" style="left:512px;top:700.1px;width:561px;height:1.3px;background:#3a3a3a"></div>
<div class="a" style="left:512px;top:751.1px;width:561px;height:1.3px;background:#3a3a3a"></div>
<div class="a" style="left:512px;top:802.1px;width:561px;height:1.3px;background:#3a3a3a"></div>
<div class="a" style="left:511.1px;top:852.2px;width:562.7px;height:2.4px;background:#000"></div>
<div class="a" style="left:1075px;top:855px;width:11px;height:11px;border:1px solid #9a9a9a;background:#fff"></div>
<div class="a" style="left:774px;top:535px;width:1px;height:14px;background:#555"></div>
<div class="a" style="left:913px;top:602px;width:15px;height:12px;border:1px solid #b9b9b9;background:#fafafa"></div>
<svg style="left:913px;top:602px" width="15" height="12" viewBox="0 0 15 12"><path d="M4 3.500h8M9.500 3.500v6" stroke="#d9c9a0" stroke-width="1.300" fill="none"/></svg>
<div class="t" style="left:570.8px;top:215.8px;font-size:12.7px;color:#222;letter-spacing:-0.205px;">gebruiken.</div>
<div class="t" style="left:773.9px;top:215.8px;font-size:12.7px;color:#e2302d;letter-spacing:0.556px;">applicatie uit te</div>
<div class="t" style="left:773.9px;top:232.6px;font-size:12.7px;color:#222;letter-spacing:-0.128px;"><span style="color:#e2302d">schakelen</span> in het geval dat</div>
<div class="t" style="left:773.9px;top:249.3px;font-size:12.7px;color:#222;letter-spacing:0.038px;">de gebruiker dit onderdeel</div>
<div class="t" style="left:773.9px;top:266.1px;font-size:12.7px;color:#222;letter-spacing:0.123px;">niet wilt gebruiken</div>
<div class="t" style="left:519.6px;top:283.5px;font-size:12.7px;color:#222;letter-spacing:-0.710px;">F-3</div>
<div class="t" style="left:519.6px;top:367.4px;font-size:12.7px;color:#222;letter-spacing:-0.544px;">F-4</div>
<div class="t" style="left:519.6px;top:418.1px;font-size:12.7px;color:#222;letter-spacing:-0.710px;">F-5</div>
<div class="t" style="left:519.6px;top:535.8px;font-size:12.7px;color:#222;letter-spacing:-0.544px;">F-6</div>
<div class="t" style="left:519.6px;top:603.4px;font-size:12.7px;color:#222;letter-spacing:-0.544px;">F-7</div>
<div class="t" style="left:519.6px;top:704.0px;font-size:12.7px;color:#222;letter-spacing:-0.576px;">NF-1</div>
<div class="t" style="left:519.6px;top:755.0px;font-size:12.7px;color:#222;letter-spacing:-0.451px;">NF-2</div>
<div class="t" style="left:519.6px;top:806.0px;font-size:12.7px;color:#222;letter-spacing:-0.451px;">NF-3</div>
<div class="t" style="left:570.8px;top:283.5px;font-size:12.7px;color:#222;letter-spacing:-0.235px;">De gegevens kunnen gedeeld</div>
<div class="t" style="left:570.8px;top:300.2px;font-size:12.7px;color:#222;letter-spacing:0.077px;">worden met de betreffende arts.</div>
<div class="t" style="left:570.8px;top:367.4px;font-size:12.7px;color:#222;letter-spacing:-0.024px;">Na de initialisatie moet er een</div>
<div class="t" style="left:570.8px;top:384.1px;font-size:12.7px;color:#222;letter-spacing:-0.103px;">optie zijn om de gegevensdeling</div>
<div class="t" style="left:570.8px;top:400.9px;font-size:12.7px;color:#222;letter-spacing:0.053px;">met de arts uit te zetten.</div>
<div class="t" style="left:570.8px;top:418.1px;font-size:12.7px;color:#222;letter-spacing:-0.053px;">Als blijkt dat de gebruiker een</div>
<div class="t" style="left:570.8px;top:434.8px;font-size:12.7px;color:#222;letter-spacing:0.040px;">slecht mentaal welzijn heeft moet</div>
<div class="t" style="left:570.8px;top:451.6px;font-size:12.7px;color:#222;letter-spacing:-0.084px;">de gebruiker kunnen kiezen om</div>
<div class="t" style="left:570.8px;top:468.3px;font-size:12.7px;color:#222;letter-spacing:0.016px;">doorverwezen te worden naar</div>
<div class="t" style="left:570.8px;top:485.1px;font-size:12.7px;color:#222;letter-spacing:0.054px;">een betreffende arts.</div>
<div class="t" style="left:570.8px;top:535.8px;font-size:12.7px;color:#222;letter-spacing:-0.015px;">Er moeten grafieken worden</div>
<div class="t" style="left:570.8px;top:552.5px;font-size:12.7px;color:#222;letter-spacing:0.037px;">ontwikkeld om een overzicht te</div>
<div class="t" style="left:570.8px;top:569.3px;font-size:12.7px;color:#222;letter-spacing:-0.113px;">genereren van de afgelopen</div>
<div class="t" style="left:570.8px;top:586.0px;font-size:12.7px;color:#222;letter-spacing:-0.134px;">weken.</div>
<div class="t" style="left:570.8px;top:603.4px;font-size:12.7px;color:#222;letter-spacing:-0.062px;">De resultaten uit de Likertschaal</div>
<div class="t" style="left:570.8px;top:620.1px;font-size:12.7px;color:#222;letter-spacing:-0.007px;">worden per gebruiker in een</div>
<div class="t" style="left:570.8px;top:636.9px;font-size:12.7px;color:#222;letter-spacing:-0.448px;">JSON opgeslagen in de</div>
<div class="t" style="left:570.8px;top:653.6px;font-size:12.7px;color:#222;letter-spacing:-0.254px;">gekoppelde MySQL-database.</div>
<div class="t" style="left:570.8px;top:704.0px;font-size:12.7px;color:#222;letter-spacing:-0.038px;">Het systeem dient makkelijk in</div>
<div class="t" style="left:570.8px;top:720.7px;font-size:12.7px;color:#222;letter-spacing:-0.014px;">gebruik te zijn voor iedere</div>
<div class="t" style="left:570.8px;top:737.5px;font-size:12.7px;color:#222;letter-spacing:0.047px;">leeftijdsgroep.</div>
<div class="t" style="left:570.8px;top:755.0px;font-size:12.7px;color:#222;letter-spacing:-0.077px;">Het systeem moet 24 uur per dag</div>
<div class="t" style="left:570.8px;top:771.7px;font-size:12.7px;color:#222;letter-spacing:-0.173px;">en 7 dagen per week beschikbaar</div>
<div class="t" style="left:570.8px;top:788.5px;font-size:12.7px;color:#222;letter-spacing:-0.132px;">zijn.</div>
<div class="t" style="left:570.8px;top:806.0px;font-size:12.7px;color:#222;letter-spacing:-0.199px;">De gegevens die de gebruiker</div>
<div class="t" style="left:570.8px;top:822.7px;font-size:12.7px;color:#222;letter-spacing:0.023px;">opstuurt dienen beveiligd te zijn</div>
<div class="t" style="left:570.8px;top:839.5px;font-size:12.7px;color:#222;letter-spacing:-0.145px;">volgens de AVG-wet.</div>
<div class="t" style="left:773.9px;top:283.5px;font-size:12.7px;color:#222;letter-spacing:-0.046px;"><span style="color:#e2302d">De gebruiker</span> moet de</div>
<div class="t" style="left:773.9px;top:300.2px;font-size:12.7px;color:#222;letter-spacing:0.017px;">optie hebben om <span style="color:#e2302d">de</span></div>
<div class="t" style="left:773.9px;top:317.0px;font-size:12.7px;color:#222;letter-spacing:-0.157px;"><span style="color:#e2302d">geregistreerde gegevens</span> te</div>
<div class="t" style="left:773.9px;top:333.7px;font-size:12.7px;color:#222;letter-spacing:0.062px;">delen met <span style="color:#e2302d">het</span></div>
<div class="t" style="left:773.9px;top:350.5px;font-size:12.7px;color:#e2302d;letter-spacing:0.114px;">preventiecentrum.</div>
<div class="t" style="left:773.9px;top:418.1px;font-size:12.7px;color:#222;letter-spacing:-0.065px;">De gebruiker moet een</div>
<div class="t" style="left:773.9px;top:434.8px;font-size:12.7px;color:#222;letter-spacing:0.051px;">optie hebben om</div>
<div class="t" style="left:773.9px;top:451.6px;font-size:12.7px;color:#222;letter-spacing:0.007px;">doorverwezen te kunnen</div>
<div class="t" style="left:773.9px;top:468.3px;font-size:12.7px;color:#222;letter-spacing:0.057px;">worden wanneer het</div>
<div class="t" style="left:773.9px;top:485.1px;font-size:12.7px;color:#222;letter-spacing:0.037px;">mentale welbevinden</div>
<div class="t" style="left:773.9px;top:501.8px;font-size:12.7px;color:#222;letter-spacing:-0.114px;">onder een <span style="color:#e2302d">marge van 3 op</span></div>
<div class="t" style="left:773.9px;top:518.6px;font-size:12.7px;color:#e2302d;letter-spacing:-0.090px;">de Likertschaal komt.</div>
<div class="t" style="left:773.9px;top:603.4px;font-size:12.7px;color:#222;letter-spacing:0.003px;">De resultaten uit de</div>
<div class="t" style="left:773.9px;top:620.1px;font-size:12.7px;color:#222;letter-spacing:-0.065px;">Likertschaal worden per</div>
<div class="t" style="left:773.9px;top:636.9px;font-size:12.7px;color:#222;letter-spacing:-0.327px;">gebruiker in een JSON</div>
<div class="t" style="left:773.9px;top:653.6px;font-size:12.7px;color:#222;letter-spacing:-0.229px;">opgeslagen in de</div>
<div class="t" style="left:773.9px;top:670.4px;font-size:12.7px;color:#222;letter-spacing:-0.281px;">gekoppelde MySQL-</div>
<div class="t" style="left:773.9px;top:687.1px;font-size:12.7px;color:#222;letter-spacing:-0.248px;">database.</div>
<div class="t" style="left:962.2px;top:283.5px;font-size:12.7px;color:#222;letter-spacing:-0.067px;">Begint met een</div>
<div class="t" style="left:962.2px;top:300.2px;font-size:12.7px;color:#222;letter-spacing:0.095px;">actor.</div>
<div class="t" style="left:962.2px;top:317.0px;font-size:12.7px;color:#222;letter-spacing:-0.124px;">Specifieker.</div>
<div class="t" style="left:940.3px;top:283.5px;font-size:12.7px;color:#222;">-</div>
<div class="t" style="left:940.3px;top:317.0px;font-size:12.7px;color:#222;">-</div>
<div class="t" style="left:962.2px;top:418.1px;font-size:12.7px;color:#222;letter-spacing:-0.254px;">Specifiek</div>
<div class="t" style="left:962.2px;top:434.8px;font-size:12.7px;color:#222;letter-spacing:-0.067px;">Begint met een</div>
<div class="t" style="left:962.2px;top:451.6px;font-size:12.7px;color:#222;letter-spacing:0.095px;">actor.</div>
<div class="t" style="left:962.2px;top:468.3px;font-size:12.7px;color:#222;letter-spacing:0.151px;">Meetbaar.</div>
<div class="t" style="left:940.3px;top:418.1px;font-size:12.7px;color:#222;">-</div>
<div class="t" style="left:940.3px;top:434.8px;font-size:12.7px;color:#222;">-</div>
<div class="t" style="left:940.3px;top:468.3px;font-size:12.7px;color:#222;">-</div>
<div class="t" style="left:962.2px;top:603.4px;font-size:12.7px;color:#222;letter-spacing:-0.156px;">Nieuwe eis</div>
<div class="t" style="left:940.3px;top:603.4px;font-size:12.7px;color:#222;">-</div>
</div></div>
<div class="a" style="left:52px;top:895px;width:1495px;height:17px;background:#f3f2f1"></div>
<div class="a" style="left:1345px;top:895px;width:30.500px;height:17px;background:#d2d0ce"></div>
<div class="t" style="left:58.5px;top:898.7px;font-size:9px;color:#555;letter-spacing:-0.223px;">Pagina 17 van 19</div>
<div class="t" style="left:140.0px;top:898.7px;font-size:9px;color:#555;letter-spacing:0.038px;">2124 woorden</div>
<div class="t" style="left:236.5px;top:898.7px;font-size:9px;color:#555;letter-spacing:-0.048px;">Nederlands (standaard)</div>
<div class="t" style="left:1164.0px;top:898.7px;font-size:9px;color:#555;letter-spacing:0.053px;">Weergave-instellingen</div>
<div class="t" style="left:1281.0px;top:898.7px;font-size:9px;color:#555;letter-spacing:-0.363px;">Focus</div>
<div class="t" style="left:1520.5px;top:898.7px;font-size:9px;color:#555;letter-spacing:-0.633px;">120%</div>
<svg style="left:52px;top:895px" width="1495" height="17" viewBox="52 895 1495 17" fill="none" stroke="#555" stroke-width="0.900">
<path d="M212.500 899.500h4l1 1l1-1h4v7h-4l-1 1l-1-1h-4z M217.500 900.500v6"/>
<path d="M346 899.500h9v6.500h-9z M346 901.500h9"/><circle cx="353.500" cy="905.500" r="2.300" fill="#f3f2f1"/><circle cx="353.500" cy="905.500" r="0.800" fill="#555"/>
<path d="M1150.500 899.500h9v6h-9z M1153 907.500h4"/><circle cx="1158" cy="906" r="2.200" fill="#f3f2f1"/><circle cx="1158" cy="906" r="0.700" fill="#555"/>
<path d="M1270.500 899v-1.500h1.500 M1277.500 897.500h1.500v1.500 M1279 907v1.500h-1.500 M1272 908.500h-1.500v-1.500 M1272.500 899.500h3l1.500 1.500v5.500h-4.500z"/>
<path d="M1323.500 899.500h4l0.500 0.500l0.500-0.500h4v7.500h-4l-0.500 0.500l-0.500-0.500h-4z M1328 900v7.500 M1324.500 901.500h2.500 M1324.500 903.500h2.500 M1329 901.500h2.500 M1329 903.500h2.500"/>
<path d="M1356 898.500h7.500v10h-7.500z M1357.500 901h4.500 M1357.500 903h4.500 M1357.500 905h4.500" stroke="#333"/>
<path d="M1386.500 898.500h9v9h-9z M1386.500 900.500h9 M1388 902.500h4 M1388 904.500h3"/><circle cx="1394.500" cy="906.500" r="2.200" fill="#f3f2f1"/>
<path d="M1411.500 904h5" stroke="#666"/><path d="M1422 904h79" stroke="#a5a5a5" stroke-width="0.800"/><path d="M1503.500 904h5 M1506 901.500v5" stroke="#666"/>
<rect x="1461" y="899.500" width="2.400" height="9" fill="#666" stroke="none"/>
</svg>
<div class="a" style="left:52px;top:912px;width:1495px;height:31px;background:#28272c"></div>
<div class="a" style="left:89px;top:912px;width:268px;height:31px;background:#f1f1f1;border-top:1px solid #fff"></div>
<div class="a" style="left:702px;top:912px;width:38px;height:31px;background:#4b4a4f"></div>
<div class="t" style="left:122.0px;top:923.1px;font-size:12.2px;color:#4a4a4a;letter-spacing:-0.329px;">Typ hier om te zoeken</div>
<div class="a" style="left:400.0px;top:941.200px;width:31.0px;height:1.800px;background:#7ab6ea"></div>
<div class="a" style="left:437.5px;top:941.200px;width:32.0px;height:1.800px;background:#7ab6ea"></div>
<div class="a" style="left:476.0px;top:941.200px;width:31.5px;height:1.800px;background:#7ab6ea"></div>
<div class="a" style="left:591.0px;top:941.200px;width:31.0px;height:1.800px;background:#7ab6ea"></div>
<div class="a" style="left:628.0px;top:941.200px;width:32.0px;height:1.800px;background:#7ab6ea"></div>
<div class="a" style="left:667.0px;top:941.200px;width:32.0px;height:1.800px;background:#7ab6ea"></div>
<div class="a" style="left:702.0px;top:941.200px;width:38.0px;height:1.800px;background:#7ab6ea"></div>
<svg style="left:52px;top:912px" width="1495" height="31" viewBox="52 912 1495 31" fill="none" stroke="#eee" stroke-width="1.100">
<path d="M64 922.500l5.500-0.800v5.300h-5.500z M70.500 921.500l7-1v6.500h-7z M64 928h5.500v5.300l-5.500-0.800z M70.500 928h7v6.500l-7-1z" fill="#ddd" stroke="none"/>
<circle cx="109" cy="926" r="3.800" stroke="#333" stroke-width="1.200"/><path d="M106.300 928.700l-4 4" stroke="#333" stroke-width="1.300"/>
<path d="M370.500 922.500h8v9h-8z M369 921v1.500 M369 933v-1.500 M380 921v1.500 M380 933v-1.500 M382.500 923v2 M382.500 928v4" stroke="#f2f2f2" stroke-width="1.300"/>
<path d="M406.500 920h6l1.500 1.500h9.500v13h-17z" fill="#f6c94b" stroke="none"/><path d="M406.500 924h17v10.500h-17z" fill="#fbd867" stroke="none"/><path d="M411 929.500h8v5h-8z" fill="#2f8fe0" stroke="none"/><path d="M413.500 932h3v2.500h-3z" fill="#fbd867" stroke="none"/>
<circle cx="454" cy="927" r="8.800" fill="#dd4b3e" stroke="none"/><path d="M454 927L446.400 931.400A8.800 8.800 0 0 0 454 935.800z" fill="#1da362" stroke="none"/><path d="M454 927l-7.600 4.400a8.800 8.800 0 0 0 11.900 3.300z" fill="#1da362" stroke="none"/><path d="M454 927l4.300 7.700a8.800 8.800 0 0 0 3.600-11.800z" fill="#ffce44" stroke="none"/><circle cx="454" cy="927" r="4.200" fill="#fff" stroke="none"/><circle cx="454" cy="927" r="3.300" fill="#4a8af4" stroke="none"/>
<path d="M487 919.500h13v15h-13z" fill="#1b74c9" stroke="none"/><path d="M493 922h8v11h-8z" fill="#35a2ef" stroke="none"/><path d="M482 922.500h10v10h-10z" fill="#0f5fb4" stroke="none"/><circle cx="487" cy="927.500" r="2.400" stroke="#fff" stroke-width="1.400"/>
<path d="M521.500 920l12-2.500l5.500 7l-2 11l-12.500 1.500l-4.500-7z" fill="#21d789" stroke="none"/><path d="M533.500 917.500l5.500 7l-2 11z" fill="#fcf84a" stroke="none"/><path d="M524 921h12v12h-12z" fill="#111" stroke="none"/><path d="M525.500 931h4.500" stroke="#fff" stroke-width="0.900"/>
<path d="M559 920.500l9-3l8.500 5.500l-1.500 11l-10 3l-7-6z" fill="#b24af2" stroke="none"/><path d="M568 917.500l8.500 5.500l-1.500 11z" fill="#ff45c8" stroke="none"/><path d="M562 921h12v12h-12z" fill="#111" stroke="none"/><path d="M563.500 931h4.500" stroke="#fff" stroke-width="0.900"/>
<circle cx="610" cy="921.500" r="2.800" fill="#7b83eb" stroke="none"/><circle cx="614.500" cy="923" r="2" fill="#5059c9" stroke="none"/><path d="M605 925.500h9.500v7a4 4 0 0 1-4 4h-1.500a4 4 0 0 1-4-4z" fill="#7b83eb" stroke="none"/><path d="M613 926h5v5.500a3 3 0 0 1-5 2z" fill="#5059c9" stroke="none"/><path d="M597.500 922.500h10v10h-10z" fill="#4b53bc" stroke="none"/><circle cx="612" cy="934" r="4.200" fill="#e0323c" stroke="none"/>
<path d="M636.500 918.500h15v17h-15z" fill="#d8221b" stroke="none"/><path d="M639.500 932c3-2.500 4.500-7 4.300-9.500c-0.100-1.200-1.500-1.200-1.600 0c-0.200 3 3 7 6.300 7.300c1.300 0 1.300-1.600 0-1.700c-2.800-0.200-7 1.700-9 3.900z" stroke="#fff" stroke-width="1.100"/>
<path d="M677.500 919l10-1.500l3 15l-13 3.500l-3-5z" fill="#9fc6dc" stroke="none"/><path d="M677.500 919l10-1.500l1.500 8l-12 2z" fill="#d6e8f2" stroke="none"/><path d="M674.500 931l3 5l13-3.500" stroke="#6d8fa3" stroke-width="0.800"/>
<path d="M716 919h12.500v16h-12.500z" fill="#2b7cd3" stroke="none"/><path d="M716 919h12.500v5h-12.500z" fill="#41a5ee" stroke="none"/><path d="M716 929h12.500v6h-12.500z" fill="#185abd" stroke="none"/><path d="M711.500 922.500h9.500v9.500h-9.500z" fill="#185abd" stroke="none"/>
<path d="M1245.500 920h37.500v15.500h-37.500z" fill="#1d9a52" stroke="#fff" stroke-width="1.200"/><path d="M1284 925v5.500" stroke="#fff" stroke-width="1.600"/>
<path d="M1290 923.500v-3 M1294.500 923.500v-3 M1288.800 923.500h7v3a3.500 3.500 0 0 1-7 0z M1292.300 930v4" stroke="#f2f2f2" stroke-width="1.300" fill="#f2f2f2"/>
<path d="M1304.500 929.500l4.500-4.500l4.500 4.500" stroke="#f2f2f2" stroke-width="1.200"/>
<rect x="1324.500" y="919.500" width="5" height="10" rx="2.500" fill="#ddd" stroke="none"/><path d="M1322.500 927.500a4.500 4.500 0 0 0 9 0 M1327 932v2.500" stroke="#ccc"/>
<circle cx="1346" cy="927.500" r="4.500" stroke="#e0b022" stroke-width="1.800"/><path d="M1344 927.500l1.800 2l4-4.500" stroke="#3fb34f" stroke-width="1.600"/>
<path d="M1362.500 922.500h5v11h-5z M1363.500 920h3v2.500h-3z" stroke="#ddd"/><path d="M1367.500 931.500l2.500-2.500" stroke="#ddd"/>
<path d="M1379.500 924.500h10v6.500h-10z" fill="#e8e8e8" stroke="none"/><path d="M1377.500 922.500h4v3h-4z" fill="#bbb" stroke="none"/><path d="M1389.500 926.500h2" stroke="#ddd"/>
<path d="M1397.500 932.500a6.500 6.500 0 0 1 9-7 M1400 932.500a4 4 0 0 1 5.500-4" stroke="#8a8a8a"/><circle cx="1405" cy="932" r="1.300" fill="#bbb" stroke="none"/>
<path d="M1416 925.500h2.500l3-3v10l-3-3h-2.500z" stroke="#eee"/><path d="M1424 924.500a4 4 0 0 1 0 6 M1426 922.500a7 7 0 0 1 0 10" stroke="#8a8a8a"/>
<path d="M1438.500 933.500c-2-3 2-5.500 4-3.500s3.500-4 5-9c0.500-2 3-1 2 1l-5 9" stroke="#eee" stroke-width="1.300"/>
<path d="M1514.500 920.500h13.500v10.500h-8l-3 3v-3h-2.500z" stroke="#f2f2f2" stroke-width="1.200"/><circle cx="1526.500" cy="931" r="2.800" fill="#28272c" stroke="#eee" stroke-width="0.900"/>
<path d="M1543.500 912v31" stroke="#7b7b80" stroke-width="0.900"/>
</svg>
<div class="t" style="left:1250.5px;top:922.1px;font-size:11.5px;color:#fff;letter-spacing:-0.230px;">100%</div>
<div class="t" style="left:1470.0px;top:915.7px;font-size:9.5px;color:#f2f2f2;letter-spacing:-0.356px;">10:19</div>
<div class="t" style="left:1463.0px;top:929.6px;font-size:9.5px;color:#f2f2f2;letter-spacing:-0.379px;">7-1-2021</div>
<div class="t" style="left:600.0px;top:923.6px;font-size:8px;color:#fff;font-weight:bold;">T</div>
<div class="t" style="left:610.3px;top:930.8px;font-size:6.5px;color:#fff;font-weight:bold;">2</div>
<div class="t" style="left:526.0px;top:922.0px;font-size:6.2px;color:#fff;font-weight:bold;">PC</div>
<div class="t" style="left:564.0px;top:922.0px;font-size:6.2px;color:#fff;font-weight:bold;">PS</div>
<div class="t" style="left:712.5px;top:923.4px;font-size:8px;color:#fff;font-weight:bold;">W</div>
</div></div>
<div class="a" style="left:2px;top:911px;width:168px;height:23.500px;background:rgba(0,0,0,.56);border-radius:0 0 4px 0"></div>
<div class="t" style="left:17.0px;top:919.3px;font-size:12px;color:#fff;letter-spacing:-0.358px;-webkit-text-stroke:.3px #fff;">Claessens, Ruben (2064049)</div>
<div class="a" style="left:1059px;top:944.500px;width:180px;height:95px;background:#333"></div>
<svg style="left:1126.7px;top:969.8px" width="44.4" height="44.4" viewBox="-16 -16 32 32"><defs><clipPath id="av2"><circle cx="0" cy="0" r="16"/></clipPath></defs><g clip-path="url(#av2)"><rect x="-16" y="-16" width="32" height="32" fill="#dfe8ee"/><path d="M-16 -4c6-6 12-6 16 0c6-8 12-6 16 0v10h-32z" fill="#93a45e"/><rect x="-16" y="1" width="32" height="5" fill="#c3ccd2"/><rect x="-12" y="-16" width="3.500" height="20" fill="#eef2f5"/><rect x="-7.500" y="-16" width="4" height="21" fill="#e1e7ee"/><rect x="-2.500" y="-16" width="5.500" height="14" fill="#d9e1ea"/><path d="M-16 4h10v14h-10z" fill="#2b303b"/><path d="M-10 16c0-8 4-11 9-11s10 3 10 11z" fill="#efe9e3"/><rect x="-2.500" y="5" width="4" height="12" fill="#d3e2f3"/><path d="M-4 -3.500h7.500v6.500l-2 3h-4l-1.500-3z" fill="#b98b6e"/><path d="M-3.500 1.500h7l-0.500 3.500l-2 1.800h-2.500l-2-2z" fill="#1f1714"/><path d="M-5 -4.500c0-5 9-5 9.500 0z" fill="#efe6c6"/><rect x="-5.500" y="-5.200" width="11" height="1.800" rx=".5" fill="#2f4a9a"/><rect x="-1" y="-2.500" width="4.500" height="1.700" rx=".6" fill="#2a3550"/></g></svg>
<div class="t" style="left:1074.0px;top:1021.9px;font-size:11.6px;color:#fff;letter-spacing:-0.049px;-webkit-text-stroke:.45px #fff;">Alhamid, Sayf (2065...</div>
<div class="a" style="left:1200.7px;top:1025.800px;width:2.800px;height:2.800px;border-radius:50%;background:#e6e6e6"></div>
<div class="a" style="left:1206.8px;top:1025.800px;width:2.800px;height:2.800px;border-radius:50%;background:#e6e6e6"></div>
<div class="a" style="left:1213.0px;top:1025.800px;width:2.800px;height:2.800px;border-radius:50%;background:#e6e6e6"></div>
<div class="a" style="left:1239px;top:945px;width:180px;height:94.500px;overflow:hidden;background:#d2cbb3">
<div class="a" style="left:107.0px;top:0.0px;width:73.0px;height:95.0px;background:linear-gradient(180deg,#d9d2bc,#cdc5ab);"></div>
<div class="a" style="left:0.0px;top:0.0px;width:14.0px;height:95.0px;background:linear-gradient(#c8c8c2,#a6a69f);"></div>
<div class="a" style="left:14.0px;top:0.0px;width:93.0px;height:63.0px;background:#e6e2da;"></div>
<div class="a" style="left:14.0px;top:0.0px;width:38.0px;height:64.0px;background:repeating-linear-gradient(#7e97b3 0,#6b86a3 1.400px,#58728f 2.800px);clip-path:polygon(0 0,100% 12%,100% 100%,0 100%);"></div>
<div class="a" style="left:14.0px;top:28.0px;width:38.0px;height:36.0px;background:linear-gradient(rgba(40,58,84,0),rgba(40,58,84,.75));"></div>
<div class="a" style="left:52.0px;top:0.0px;width:9.0px;height:62.0px;background:#d5d9de;"></div>
<div class="a" style="left:61.0px;top:11.0px;width:14.0px;height:30.0px;background:repeating-linear-gradient(#8199b4 0,#6e88a5 1.400px,#5b7592 2.800px);"></div>
<div class="a" style="left:85.0px;top:0.0px;width:22.0px;height:56.0px;background:linear-gradient(90deg,#ebe9e4,#dcd9d0);"></div>
<div class="a" style="left:92.0px;top:3.0px;width:9.0px;height:40.0px;background:#efeae0;"></div>
<div class="a" style="left:14.0px;top:63.0px;width:40.0px;height:32.0px;background:linear-gradient(#96968f,#b3b1a7 60%,#8c8b84);"></div>
<div class="a" style="left:128.0px;top:21.5px;width:52.0px;height:4.5px;background:#e9e4d2;"></div>
<div class="a" style="left:133.0px;top:14.0px;width:47.0px;height:7.0px;background:linear-gradient(90deg,#6a6150,#4e4a40 40%,#6b5a3c);border-radius:2px 2px 0 0;clip-path:polygon(0 100%,12% 10%,30% 60%,100% 30%,100% 100%);"></div>
<div class="a" style="left:107.0px;top:54.0px;width:14.0px;height:30.0px;background:#d8c8a4;"></div>
<div class="a" style="left:113.0px;top:60.0px;width:67.0px;height:35.0px;background:#15130f;border-radius:10px 0 0 0;"></div>
<div class="a" style="left:133.0px;top:57.0px;width:14.0px;height:9.0px;background:#d6ae22;border-radius:2px;transform:rotate(12deg);"></div>
<div class="a" style="left:136.0px;top:75.0px;width:36.0px;height:10.0px;background:#d4d2cc;transform:rotate(4deg);"></div>
<div class="a" style="left:104.0px;top:51.0px;width:7.0px;height:4.0px;background:#b8452a;"></div>
<div class="a" style="left:50.0px;top:34.0px;width:28.0px;height:61.0px;background:#121217;border-radius:9px 7px 0 0;transform:skewX(6deg);"></div>
<div class="a" style="left:62.0px;top:38.0px;width:50.0px;height:60.0px;background:#1a1f33;border-radius:20px 18px 6px 0;"></div>
<div class="a" style="left:84.0px;top:42.0px;width:16.0px;height:10.0px;background:#141828;border-radius:0 0 8px 8px;"></div>
<div class="a" style="left:80.0px;top:62.0px;width:26.0px;height:21.0px;background:linear-gradient(#9a9db0,#676b84);border-radius:3px;transform:skewY(-8deg);opacity:.8;"></div>
<div class="a" style="left:86.0px;top:38.0px;width:10.0px;height:8.0px;background:#a88a78;"></div>
<div class="a" style="left:78.0px;top:14.0px;width:22.0px;height:30.0px;background:#bb9b89;border-radius:7px 9px 11px 11px;"></div>
<div class="a" style="left:74.0px;top:6.0px;width:27.0px;height:17.0px;background:#1c1d25;border-radius:13px 14px 3px 4px;"></div>
<div class="a" style="left:69.0px;top:17.0px;width:10.0px;height:20.0px;background:#17181e;border-radius:5px;"></div>
<div class="a" style="left:81.0px;top:23.0px;width:20.0px;height:6.5px;background:rgba(130,145,240,.75);border:1px solid #2a2b38;border-radius:2px;"></div>
<div class="a" style="left:93.0px;top:36.0px;width:12.0px;height:1.6px;background:#1a1a1f;transform:rotate(8deg);"></div>
</div>
<div class="t" style="left:1254.4px;top:1021.9px;font-size:11.6px;color:#fff;letter-spacing:-0.182px;-webkit-text-stroke:.45px #fff;text-shadow:0 0 2px rgba(0,0,0,.8);">Claessens, Ruben (2064049)</div>
<div class="a" style="left:1419px;top:945px;width:180px;height:94.500px;overflow:hidden;background:#3b2415">
<div class="a" style="left:0;top:0;width:180px;height:95px;background:repeating-linear-gradient(180deg,#2a160b 0,#5c3620 1.200px,#2a160b 2.200px,#63301c 2.800px,#74381f 5.500px,#4a2616 7.500px,#22110a 9.200px)"></div>
<div class="a" style="left:0;top:0;width:180px;height:95px;background:repeating-linear-gradient(90deg,rgba(20,10,4,.55) 0,rgba(20,10,4,0) .800px,rgba(170,80,40,.22) 1.600px,rgba(20,10,4,.4) 2.400px,rgba(120,90,50,.22) 3.400px,rgba(20,10,4,.5) 4.600px,rgba(150,50,30,.2) 5.600px,rgba(20,10,4,.45) 7px)"></div>
<div class="a" style="left:0;top:0;width:180px;height:95px;background:rgba(18,9,4,.38)"></div>
<div class="a" style="left:23.3px;top:0;width:3.500px;height:95px;background:#38200f"></div>
<div class="a" style="left:70.3px;top:0;width:3.500px;height:95px;background:#38200f"></div>
<div class="a" style="left:112.3px;top:0;width:3.500px;height:95px;background:#38200f"></div>
<div class="a" style="left:149.3px;top:0;width:3.500px;height:95px;background:#38200f"></div>
<div class="a" style="left:25.5px;top:-4.0px;width:11px;height:11px;border-radius:50%;background:radial-gradient(#ffd98a 0,#f5a338 20%,rgba(214,120,30,.4) 45%,rgba(200,100,20,0) 72%)"></div>
<div class="a" style="left:49.5px;top:4.2px;width:11px;height:11px;border-radius:50%;background:radial-gradient(#ffd98a 0,#f5a338 20%,rgba(214,120,30,.4) 45%,rgba(200,100,20,0) 72%)"></div>
<div class="a" style="left:102.5px;top:9.0px;width:11px;height:11px;border-radius:50%;background:radial-gradient(#ffd98a 0,#f5a338 20%,rgba(214,120,30,.4) 45%,rgba(200,100,20,0) 72%)"></div>
<div class="a" style="left:168.5px;top:10.0px;width:11px;height:11px;border-radius:50%;background:radial-gradient(#ffd98a 0,#f5a338 20%,rgba(214,120,30,.4) 45%,rgba(200,100,20,0) 72%)"></div>
<div class="a" style="left:0.3px;top:23.1px;width:11px;height:11px;border-radius:50%;background:radial-gradient(#ffd98a 0,#f5a338 20%,rgba(214,120,30,.4) 45%,rgba(200,100,20,0) 72%)"></div>
<div class="a" style="left:116.1px;top:33.3px;width:11px;height:11px;border-radius:50%;background:radial-gradient(#ffd98a 0,#f5a338 20%,rgba(214,120,30,.4) 45%,rgba(200,100,20,0) 72%)"></div>
<div class="a" style="left:89.9px;top:52.5px;width:11px;height:11px;border-radius:50%;background:radial-gradient(#ffd98a 0,#f5a338 20%,rgba(214,120,30,.4) 45%,rgba(200,100,20,0) 72%)"></div>
<div class="a" style="left:14.0px;top:50.0px;width:5px;height:34.0px;border-left:1px solid #6a4c2e;border-right:1px solid #6a4c2e;background:repeating-linear-gradient(180deg,rgba(122,90,56,0) 0,rgba(122,90,56,0) 2.500px,#6a4c2e 2.500px,#6a4c2e 3.300px);transform:rotate(6deg)"></div>
<div class="a" style="left:48.0px;top:34.0px;width:5px;height:26.0px;border-left:1px solid #6a4c2e;border-right:1px solid #6a4c2e;background:repeating-linear-gradient(180deg,rgba(122,90,56,0) 0,rgba(122,90,56,0) 2.500px,#6a4c2e 2.500px,#6a4c2e 3.300px);transform:rotate(6deg)"></div>
<div class="a" style="left:141.0px;top:42.0px;width:5px;height:40.0px;border-left:1px solid #6a4c2e;border-right:1px solid #6a4c2e;background:repeating-linear-gradient(180deg,rgba(122,90,56,0) 0,rgba(122,90,56,0) 2.500px,#6a4c2e 2.500px,#6a4c2e 3.300px);transform:rotate(6deg)"></div>
<div class="a" style="left:172.0px;top:68.0px;width:5px;height:16.0px;border-left:1px solid #6a4c2e;border-right:1px solid #6a4c2e;background:repeating-linear-gradient(180deg,rgba(122,90,56,0) 0,rgba(122,90,56,0) 2.500px,#6a4c2e 2.500px,#6a4c2e 3.300px);transform:rotate(6deg)"></div>
<div class="a" style="left:0;top:82px;width:180px;height:13px;background:linear-gradient(rgba(30,15,8,.6),#24120a 50%)"></div>
<svg style="left:0;top:0" width="180" height="95" viewBox="0 0 180 95"><path d="M0 95l6-4l22-26l26-13l14 14l16-5l12 16l14 18z" fill="#0c0b0d"/><path d="M66 40c4-6 16-5 16 2l1 9l-1 6l-2 7l-10 2l-5-8z" fill="#b98f78"/><path d="M67 54c4 2 10 2 14 0l-2 9l-7 3l-5-5z" fill="#6d4129"/><path d="M53 40c-2-12 10-17 22-13c6 2 8 7 7 12c-6-2-12-1-15 3l-2 14l-8-3z" fill="#121013"/><ellipse cx="60" cy="45" rx="5.800" ry="7.500" fill="#68758c" stroke="#14141a" stroke-width="1.600"/></svg>
</div>
<div class="a" style="left:1238.500px;top:944.500px;width:1px;height:95px;background:#1a1a1a"></div><div class="a" style="left:1418.500px;top:944.500px;width:1px;height:95px;background:#1a1a1a"></div>
<div class="t" style="left:1434.0px;top:1021.9px;font-size:11.6px;color:#fff;letter-spacing:-0.187px;-webkit-text-stroke:.45px #fff;text-shadow:0 0 2px rgba(0,0,0,.8);">Scheidt, Jesse (2065209)</div>
<div class="t" style="left:1619.0px;top:143.4px;font-size:16.5px;color:#fff;letter-spacing:-0.155px;font-weight:bold;">Vergaderchat</div>
<div class="t" style="left:1662.0px;top:191.3px;font-size:12px;color:#cfcfcf;letter-spacing:-0.406px;">09:03</div>
<div class="t" style="left:1702.3px;top:191.3px;font-size:12px;color:#cfcfcf;letter-spacing:0.013px;">Vergadering gestart</div>
<div class="a" style="left:1641.7px;top:220.4px;width:232.3px;height:118.6px;background:#2d2c2c;border-radius:3px"></div>
<div class="a" style="left:1641.7px;top:403.0px;width:200.3px;height:57.7px;background:#2d2c2c;border-radius:3px"></div>
<div class="a" style="left:1642.0px;top:507.8px;width:232.0px;height:245.6px;background:#2d2c2c;border-radius:3px"></div>
<div class="a" style="left:1642.0px;top:770.0px;width:230.0px;height:150.8px;background:#2d2c2c;border-radius:3px"></div>
<div class="t" style="left:1657.9px;top:234.3px;font-size:12px;color:#cfcfcf;letter-spacing:-0.350px;">Claessens, Ruben (2064049)</div>
<div class="t" style="left:1817.0px;top:234.3px;font-size:12px;color:#cfcfcf;letter-spacing:-0.406px;">09:06</div>
<div class="t" style="left:1657.9px;top:252.8px;font-size:14px;color:#fff;letter-spacing:-0.232px;"><span style="color:#a6a7dc">Tossaint, BGM (Bob)</span>&nbsp; Zou je</div>
<div class="t" style="left:1657.9px;top:272.8px;font-size:14px;color:#fff;letter-spacing:-0.154px;">Jesse bij ons erbij kunnen</div>
<div class="t" style="left:1657.9px;top:292.8px;font-size:14px;color:#fff;letter-spacing:0.013px;">zetten, die kwam twee minuten</div>
<div class="t" style="left:1657.9px;top:312.8px;font-size:14px;color:#fff;letter-spacing:0.033px;">later</div>
<div class="t" style="left:1661.9px;top:357.6px;font-size:12px;color:#cfcfcf;letter-spacing:-0.284px;"><b>Scheidt, Jesse (2065209)</b> neemt</div>
<div class="t" style="left:1661.9px;top:373.0px;font-size:12px;color:#cfcfcf;letter-spacing:-0.050px;">nu deel aan de vergadering.</div>
<div class="t" style="left:1657.9px;top:416.5px;font-size:12px;color:#cfcfcf;letter-spacing:-0.117px;">Alhamid, Sayf (2065111)</div>
<div class="t" style="left:1797.2px;top:416.5px;font-size:12px;color:#cfcfcf;letter-spacing:-0.268px;">09:11</div>
<div class="t" style="left:1658.5px;top:435.5px;font-size:14px;color:#fff;">.</div>
<div class="a" style="left:1620px;top:484px;width:73px;height:1px;background:#a6a7dc"></div>
<div class="a" style="left:1813px;top:484px;width:73px;height:1px;background:#a6a7dc"></div>
<div class="t" style="left:1712.8px;top:479.0px;font-size:12px;color:#a6a7dc;letter-spacing:-0.165px;font-weight:bold;">Laatst gelezen</div>
<div class="t" style="left:1658.0px;top:521.3px;font-size:12px;color:#cfcfcf;letter-spacing:-0.113px;">Alhamid, Sayf (2065111)</div>
<div class="t" style="left:1797.7px;top:521.3px;font-size:12px;color:#cfcfcf;letter-spacing:-0.306px;">09:34</div>
<div class="a" style="left:1657.700px;top:544px;width:200.500px;height:200px;background:#fff;border-radius:3px;overflow:hidden"><div class="a" style="left:-1657.700px;top:-544px;width:1920px;height:1040px">
<svg style="left:1657px;top:544px" width="201" height="200" viewBox="1657 544 201 200" fill="none" stroke="#f3f9fb" stroke-width="2.200" stroke-linecap="round"><path d="M1722 588l22 48 M1745 590l-24 44 M1752 600v28 M1745 608h16 M1768 622c8-2 8-12 1-12c-8 0-8 18 2 16 M1784 610v18 M1784 616c4-8 12-6 11 2v10 M1810 612c-8-2-8 6-2 8c6 2 4 10-4 8 M1822 612v16 M1834 612c-8 2-8 16 0 16c8 0 8-16 0-16"/><path d="M1722 722l22 22 M1745 724l-24 22 M1752 730v14 M1768 740c8-2 8-12 1-12c-8 0-8 18 2 16 M1784 730v14 M1810 730c-8-2-8 6-2 8 M1822 728v16 M1834 728c-8 2-8 16 0 16"/></svg>
<div class="a" style="left:1670.500px;top:548.400px;width:175.300px;height:174.600px;border:1px solid #bfe6ee"></div>
<div class="a" style="left:1670.500px;top:548.400px;width:175.300px;height:15.200px;background:#17b5d0"></div>
<div class="t" style="left:1673.0px;top:551.5px;font-size:4.6px;color:#fff;letter-spacing:0.220px;font-weight:bold;">Henk de Vries</div>
<div class="a" style="left:1675px;top:566.500px;width:37px;height:40px;background:linear-gradient(90deg,#e9e6e2 0,#e9e6e2 8%,#4a3220 12%,#4a3220 20%,#d9a88a 28%,#e0b092 60%,#4a3220 75%,#e6e2dc 82%,#7a5a42 92%)"></div>
<div class="a" style="left:1679.500px;top:567.500px;width:25px;height:11px;background:#4a3220;border-radius:10px 10px 2px 2px"></div>
<div class="a" style="left:1681.500px;top:575px;width:20px;height:27px;background:#dcaa8c;border-radius:7px 7px 10px 10px"></div>
<div class="a" style="left:1686px;top:594px;width:11px;height:3px;background:#fff;border-radius:0 0 5px 5px"></div>
<div class="a" style="left:1672px;top:606.300px;width:41px;height:45.700px;background:#17b5d0"></div>
<div class="t" style="left:1791.0px;top:573.4px;font-size:5px;color:#17b5d0;">Motivatie</div>
<div class="t" style="left:1791.0px;top:619.4px;font-size:5px;color:#17b5d0;">Brands &amp; Influencers</div>
<div class="t" style="left:1791.0px;top:641.6px;font-size:5px;color:#17b5d0;">Voorkeurskanalen</div>
<div class="a" style="left:1791px;top:586.7px;width:49px;height:1.500px;background:#ececec"></div><div class="a" style="left:1791px;top:586.7px;width:33.0px;height:1.500px;background:#17b5d0"></div>
<div class="a" style="left:1791px;top:593.5px;width:49px;height:1.500px;background:#ececec"></div><div class="a" style="left:1791px;top:593.5px;width:38.3px;height:1.500px;background:#17b5d0"></div>
<div class="a" style="left:1791px;top:600.4px;width:49px;height:1.500px;background:#ececec"></div><div class="a" style="left:1791px;top:600.4px;width:19.0px;height:1.500px;background:#17b5d0"></div>
<div class="a" style="left:1791px;top:607.0px;width:49px;height:1.500px;background:#ececec"></div><div class="a" style="left:1791px;top:607.0px;width:12.0px;height:1.500px;background:#17b5d0"></div>
<div class="a" style="left:1791px;top:613.9px;width:49px;height:1.500px;background:#ececec"></div><div class="a" style="left:1791px;top:613.9px;width:44.0px;height:1.500px;background:#17b5d0"></div>
<div class="a" style="left:1791px;top:655.0px;width:49px;height:1.500px;background:#ececec"></div><div class="a" style="left:1791px;top:655.0px;width:14.0px;height:1.500px;background:#17b5d0"></div>
<div class="a" style="left:1791px;top:661.8px;width:49px;height:1.500px;background:#ececec"></div><div class="a" style="left:1791px;top:661.8px;width:48.0px;height:1.500px;background:#17b5d0"></div>
<div class="a" style="left:1791px;top:668.7px;width:49px;height:1.500px;background:#ececec"></div><div class="a" style="left:1791px;top:668.7px;width:11.7px;height:1.500px;background:#17b5d0"></div>
<div class="a" style="left:1791px;top:675.3px;width:49px;height:1.500px;background:#ececec"></div><div class="a" style="left:1791px;top:675.3px;width:12.0px;height:1.500px;background:#17b5d0"></div>
<div class="a" style="left:1804px;top:628px;width:15px;height:5px;background:#111"></div><div class="a" style="left:1819.500px;top:628px;width:9.500px;height:9.500px;background:#d8d2b4"></div>
<div class="t" style="left:1718.0px;top:645.6px;font-size:5px;color:#17b5d0;">doelen</div>
<div class="t" style="left:1718.0px;top:669.4px;font-size:5px;color:#17b5d0;">Frustraties</div>
<div class="t" style="left:1674.0px;top:678.6px;font-size:5px;color:#17b5d0;">persoonlijkheid</div>
<div class="a" style="left:1716.300px;top:691px;width:69.700px;height:29.700px;background:#ececec"></div>
<div class="t" style="left:1718.0px;top:693.6px;font-size:5px;color:#17b5d0;">Bio</div>
<div class="a" style="left:1718px;top:701.3px;width:64.0px;height:1px;background:#bdbdbd"></div>
<div class="a" style="left:1718px;top:704.5px;width:58.0px;height:1px;background:#bdbdbd"></div>
<div class="a" style="left:1718px;top:707.7px;width:34.0px;height:1px;background:#bdbdbd"></div>
<div class="a" style="left:1718px;top:710.9px;width:64.0px;height:1px;background:#bdbdbd"></div>
<div class="a" style="left:1718px;top:714.1px;width:60.0px;height:1px;background:#bdbdbd"></div>
<div class="a" style="left:1718px;top:717.3px;width:30.0px;height:1px;background:#bdbdbd"></div>
<div class="a" style="left:1720px;top:653.5px;width:22.0px;height:1px;background:#a9a9a9"></div>
<div class="a" style="left:1720px;top:656.7px;width:15.0px;height:1px;background:#a9a9a9"></div>
<div class="a" style="left:1720px;top:660.0px;width:36.0px;height:1px;background:#a9a9a9"></div>
<div class="a" style="left:1720px;top:677.4px;width:16.0px;height:1px;background:#a9a9a9"></div>
<div class="a" style="left:1720px;top:680.6px;width:13.0px;height:1px;background:#a9a9a9"></div>
<div class="a" style="left:1720px;top:683.8px;width:7.0px;height:1px;background:#a9a9a9"></div>
<div class="a" style="left:1674px;top:656.5px;width:11.0px;height:1.200px;background:#6fc9dc"></div>
<div class="a" style="left:1674px;top:660.0px;width:33.0px;height:1.200px;background:#6fc9dc"></div>
<div class="a" style="left:1674px;top:663.6px;width:20.0px;height:1.200px;background:#6fc9dc"></div>
<div class="a" style="left:1674px;top:667.0px;width:22.0px;height:1.200px;background:#6fc9dc"></div>
<div class="a" style="left:1674px;top:670.6px;width:21.0px;height:1.200px;background:#6fc9dc"></div>
<div class="a" style="left:1674px;top:691.0px;width:35px;height:1px;background:#e3e3e3"></div><div class="a" style="left:1705.0px;top:690.4px;width:2.200px;height:2.200px;background:#17b5d0"></div>
<div class="a" style="left:1674px;top:697.0px;width:35px;height:1px;background:#e3e3e3"></div><div class="a" style="left:1678.0px;top:696.4px;width:2.200px;height:2.200px;background:#17b5d0"></div>
<div class="a" style="left:1674px;top:702.3px;width:35px;height:1px;background:#e3e3e3"></div><div class="a" style="left:1702.5px;top:701.7px;width:2.200px;height:2.200px;background:#17b5d0"></div>
<div class="a" style="left:1674px;top:708.0px;width:35px;height:1px;background:#e3e3e3"></div><div class="a" style="left:1695.0px;top:707.4px;width:2.200px;height:2.200px;background:#17b5d0"></div>
</div></div>
<div class="t" style="left:1658.0px;top:783.5px;font-size:12px;color:#cfcfcf;letter-spacing:-0.362px;">Scheidt, Jesse (2065209)</div>
<div class="t" style="left:1798.5px;top:783.5px;font-size:12px;color:#cfcfcf;letter-spacing:-0.448px;">10:11</div>
<div class="a" style="left:1658px;top:801.800px;width:197.400px;height:109px;overflow:hidden;background:#b9bab1"><div class="a" style="left:-1658px;top:-801.800px;width:1920px;height:1040px">
<div class="a" style="left:1658px;top:801.800px;width:198px;height:12.500px;background:linear-gradient(#9fbcc0,#86a6ab)"></div>
<div class="a" style="left:1658px;top:813.800px;width:198px;height:18px;background:repeating-linear-gradient(90deg,#6e7264 0,#80836f 2px,#5f6355 3.500px,#8a8c7c 5px)"></div>
<div class="a" style="left:1658px;top:831.500px;width:198px;height:80px;background:linear-gradient(#a9aaa1,#c2c3ba 40%,#b4b5ac)"></div>
<div class="a" style="left:1725px;top:801.800px;width:16px;height:30px;background:#d4d3c8"></div>
<div class="a" style="left:1658px;top:819px;width:18px;height:30px;background:#c4c4b8"></div>
<div class="a" style="left:1803.500px;top:801.800px;width:9.500px;height:29px;background:#1c1c1c;border-radius:3px 3px 0 0"></div>
<div class="a" style="left:1813px;top:803px;width:42px;height:22px;background:#cfcfc6;opacity:.9"></div>
<div class="a" style="left:1826.500px;top:809px;width:4px;height:30px;background:#deddd2"></div>
<svg style="left:1658px;top:801.800px" width="198" height="109" viewBox="1658 801.800 198 109"><path d="M1661 884c-3-20 4-32 26-38l24-8c10-9 20-17 40-18c24-1 40 6 54 16c18 2 34 5 46 14c5 10 4 26 1 36l-5 8h-182z" fill="#cccbc1"/><path d="M1716 840c10-9 22-15 38-15c16 0 28 5 38 13c-22 5-54 6-76 2z" fill="#c0bfb5"/><path d="M1747 826l4 22" stroke="#d9d8ce" stroke-width="3"/><path d="M1664 882h188l-2 12h-184z" fill="#b3b2a8"/><circle cx="1702.300" cy="881.500" r="15.500" fill="#adaca2"/><circle cx="1702.300" cy="881.500" r="9" fill="#bfbeb4"/><circle cx="1828.500" cy="878.500" r="15.500" fill="#adaca2"/><circle cx="1828.500" cy="878.500" r="9" fill="#c6c5bb"/><path d="M1740 842c4-2 8-1 10 2l-2 50h-3z" fill="#dad9cf"/><path d="M1690 850c20-6 40-8 60-8 M1760 846c20 0 50 2 76 8" stroke="#d8d7cd" stroke-width="2" fill="none"/></svg>
<div class="a" style="left:1658px;top:893px;width:198px;height:18px;background:linear-gradient(rgba(190,191,183,0),#c1c2b9 60%)"></div>
</div></div>
<svg style="left:1619.8px;top:230.7px" width="32.6" height="32.6" viewBox="-16 -16 32 32"><defs><clipPath id="av3"><circle cx="0" cy="0" r="16"/></clipPath></defs><g clip-path="url(#av3)"><rect x="-16" y="-16" width="32" height="32" fill="#c6c6c6"/><rect x="-16" y="-6" width="9" height="10" fill="#d8d8d8"/><rect x="9" y="-4" width="7" height="9" fill="#dcdcdc"/><ellipse cx="-4" cy="16" rx="13" ry="9" fill="#b9b9b9"/><path d="M-8 -2l1 9l5 7l7 1l3-5l1-7l-2-6z" fill="#9a9a9a"/><path d="M-9 -3l0 7l3 1l1-7z" fill="#3c3c3c"/><path d="M-9.500 -2.500c-1-11 12-14 16.500-3.500l6.500 1.200l-4 2l-9 0.800z" fill="#2a2a2a"/><path d="M5.500 -2.500l5-0.500l-1 3l-3.500 0.500z" fill="#222"/><path d="M-3 2a2 3 0 0 0 2 4" stroke="#777" stroke-width="1" fill="none"/></g></svg>
<div class="a" style="left:1640.2px;top:251.2px;width:13.400px;height:13.400px;border-radius:50%;background:#c4314b;border:1.600px solid #1f1f1f"></div>
<svg style="left:1619.8px;top:412.6px" width="32.6" height="32.6" viewBox="-16 -16 32 32"><defs><clipPath id="av4"><circle cx="0" cy="0" r="16"/></clipPath></defs><g clip-path="url(#av4)"><rect x="-16" y="-16" width="32" height="32" fill="#dfe8ee"/><path d="M-16 -4c6-6 12-6 16 0c6-8 12-6 16 0v10h-32z" fill="#93a45e"/><rect x="-16" y="1" width="32" height="5" fill="#c3ccd2"/><rect x="-12" y="-16" width="3.500" height="20" fill="#eef2f5"/><rect x="-7.500" y="-16" width="4" height="21" fill="#e1e7ee"/><rect x="-2.500" y="-16" width="5.500" height="14" fill="#d9e1ea"/><path d="M-16 4h10v14h-10z" fill="#2b303b"/><path d="M-10 16c0-8 4-11 9-11s10 3 10 11z" fill="#efe9e3"/><rect x="-2.500" y="5" width="4" height="12" fill="#d3e2f3"/><path d="M-4 -3.500h7.500v6.500l-2 3h-4l-1.500-3z" fill="#b98b6e"/><path d="M-3.500 1.500h7l-0.500 3.500l-2 1.800h-2.500l-2-2z" fill="#1f1714"/><path d="M-5 -4.500c0-5 9-5 9.500 0z" fill="#efe6c6"/><rect x="-5.500" y="-5.200" width="11" height="1.800" rx=".5" fill="#2f4a9a"/><rect x="-1" y="-2.500" width="4.500" height="1.700" rx=".6" fill="#2a3550"/></g></svg>
<div class="a" style="left:1640.2px;top:433.1px;width:13.400px;height:13.400px;border-radius:50%;background:#c4314b;border:1.600px solid #1f1f1f"></div>
<svg style="left:1619.8px;top:517.4px" width="32.6" height="32.6" viewBox="-16 -16 32 32"><defs><clipPath id="av5"><circle cx="0" cy="0" r="16"/></clipPath></defs><g clip-path="url(#av5)"><rect x="-16" y="-16" width="32" height="32" fill="#dfe8ee"/><path d="M-16 -4c6-6 12-6 16 0c6-8 12-6 16 0v10h-32z" fill="#93a45e"/><rect x="-16" y="1" width="32" height="5" fill="#c3ccd2"/><rect x="-12" y="-16" width="3.500" height="20" fill="#eef2f5"/><rect x="-7.500" y="-16" width="4" height="21" fill="#e1e7ee"/><rect x="-2.500" y="-16" width="5.500" height="14" fill="#d9e1ea"/><path d="M-16 4h10v14h-10z" fill="#2b303b"/><path d="M-10 16c0-8 4-11 9-11s10 3 10 11z" fill="#efe9e3"/><rect x="-2.500" y="5" width="4" height="12" fill="#d3e2f3"/><path d="M-4 -3.500h7.500v6.500l-2 3h-4l-1.500-3z" fill="#b98b6e"/><path d="M-3.500 1.500h7l-0.500 3.500l-2 1.800h-2.500l-2-2z" fill="#1f1714"/><path d="M-5 -4.500c0-5 9-5 9.500 0z" fill="#efe6c6"/><rect x="-5.500" y="-5.200" width="11" height="1.800" rx=".5" fill="#2f4a9a"/><rect x="-1" y="-2.500" width="4.500" height="1.700" rx=".6" fill="#2a3550"/></g></svg>
<div class="a" style="left:1640.2px;top:537.9px;width:13.400px;height:13.400px;border-radius:50%;background:#c4314b;border:1.600px solid #1f1f1f"></div>
<svg style="left:1619.8px;top:779.5px" width="32.6" height="32.6" viewBox="-16 -16 32 32"><defs><clipPath id="av6"><circle cx="0" cy="0" r="16"/></clipPath></defs><g clip-path="url(#av6)"><rect x="-16" y="-16" width="32" height="32" fill="#7a0a1c"/><circle cx="-5" cy="4" r="11" fill="#c4122e"/><circle cx="-7" cy="6" r="6" fill="#e8324a"/><circle cx="-8" cy="8" r="2.500" fill="#ff7a8a"/><path d="M-16 -16h20l-8 10l-12 6z" fill="#4a0612"/><path d="M2 -16l14 0v30l-10 2l-3-12z" fill="#3a0a14"/><path d="M3 -11l7-3l5 4l-1 4h-9z" fill="#15151a"/><path d="M5 -6h8l-1 7l-3 2l-3-2z" fill="#d9a184"/><path d="M6 3h7l2 13h-10z" fill="#b8202e"/><path d="M8 -3.500h3v2h-3z" fill="#2aa8a0"/></g></svg>
<div class="a" style="left:1640.2px;top:800.0px;width:13.400px;height:13.400px;border-radius:50%;background:#c4314b;border:1.600px solid #1f1f1f"></div>
<div class="a" style="left:1644.500px;top:257.100px;width:4.800px;height:1.500px;background:#f4d6dc"></div>
<div class="a" style="left:1619.500px;top:954.300px;width:279.500px;height:42px;background:#2d2c2c;border:1px solid #171717;border-radius:4px"></div>
<div class="t" style="left:1636.7px;top:968.1px;font-size:14px;color:#bdbbb9;letter-spacing:-0.084px;">Een nieuw bericht typen</div>
<svg style="left:1598px;top:101px" width="322" height="939" viewBox="1598 101 322 939" fill="none" stroke="#dcdcdc" stroke-width="1.200" stroke-linecap="round" stroke-linejoin="round">
<path d="M1878 145.200l10 10 M1888 145.200l-10 10" stroke="#e6e6e6" stroke-width="1.100"/>
<path d="M1629.500 191.500h7.500a2 2 0 0 1 2 2v5a2 2 0 0 1-2 2h-7.500a2 2 0 0 1-2-2v-5a2 2 0 0 1 2-2z M1640.500 194.500l3.500-2.300v7.600l-3.500-2.300z" fill="#a6a7dc" stroke="none"/><path d="M1629.500 189.300a9 9 0 0 1 9 0 M1629.500 202.700a9 9 0 0 0 9 0" stroke="#a6a7dc" stroke-width="1"/>
<path d="M1630.500 366.500h10a1 1 0 0 1 1 1v5 M1636 377.500h-5.500a1 1 0 0 1-1-1v-9a1 1 0 0 1 1-1 M1632.500 365v2.500 M1638.500 365v2.500 M1629.500 369.500h12 M1640.500 374.500v5 M1638 377h5" stroke="#d0d0d0" stroke-width="1.100"/>
<rect x="1631.9" y="370.9" width="1.200" height="1.200" fill="#d0d0d0" stroke="none"/>
<rect x="1631.9" y="373.9" width="1.200" height="1.200" fill="#d0d0d0" stroke="none"/>
<rect x="1634.9" y="370.9" width="1.200" height="1.200" fill="#d0d0d0" stroke="none"/>
<rect x="1634.9" y="373.9" width="1.200" height="1.200" fill="#d0d0d0" stroke="none"/>
<rect x="1637.9" y="370.9" width="1.200" height="1.200" fill="#d0d0d0" stroke="none"/>
<rect x="1637.9" y="373.9" width="1.200" height="1.200" fill="#d0d0d0" stroke="none"/>
<path d="M1628 1019l4.500-11.500h1l4.500 11.500 M1629.800 1015h6.500 M1637 1020.500c1-3 4-7 6.500-8c1 .8.500 2-.5 3l-4 4.500z" />
<path d="M1666.800 1007.500v8" stroke-width="2.200"/><circle cx="1666.800" cy="1019.800" r="1.300" fill="#dcdcdc" stroke="none"/>
<path d="M1702 1012l-5 6a2 2 0 0 1-3-2.600l6-7.200a3.200 3.200 0 0 1 5 4l-6.300 7.600" />
<circle cx="1731" cy="1014" r="6.800"/><circle cx="1728.500" cy="1012" r=".900" fill="#dcdcdc" stroke="none"/><circle cx="1733.500" cy="1012" r=".900" fill="#dcdcdc" stroke="none"/><path d="M1727.500 1016a4 4 0 0 0 7 0"/>
<rect x="1756.500" y="1007.500" width="13.500" height="13" rx="2.500"/>
<path d="M1790.500 1007.500h10a2 2 0 0 1 2 2v6l-5 5h-7a2 2 0 0 1-2-2v-9a2 2 0 0 1 2-2z M1802.500 1015.500h-3a2 2 0 0 0-2 2v3"/><circle cx="1793" cy="1012" r=".800" fill="#dcdcdc" stroke="none"/><circle cx="1797.500" cy="1012" r=".800" fill="#dcdcdc" stroke="none"/><path d="M1792.500 1015a3.500 3.500 0 0 0 4 0"/>
<g fill="#dcdcdc" stroke="none"><circle cx="1821" cy="1014.200" r="1.400"/><circle cx="1827" cy="1014.200" r="1.400"/><circle cx="1833" cy="1014.200" r="1.400"/></g>
<path d="M1876 1008.500l14.500 6l-14.500 6l2.500-6z M1878.500 1014.500h6"/>
</svg>
<div class="t" style="left:1757.9px;top:1010.6px;font-size:7.6px;color:#dcdcdc;letter-spacing:-0.719px;font-weight:bold;">GIF</div>
</body>
</html>
